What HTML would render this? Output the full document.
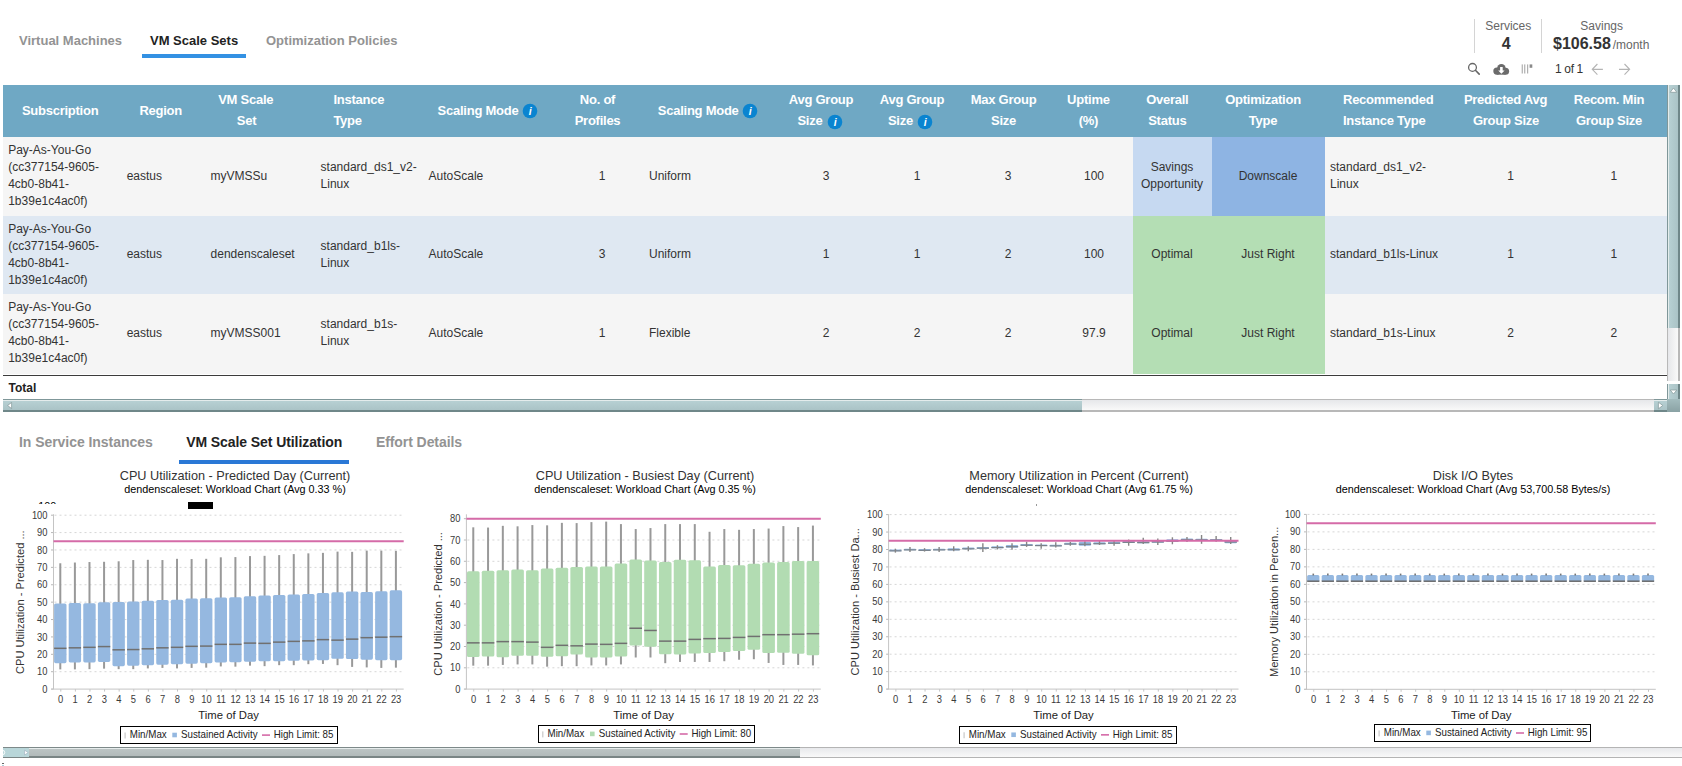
<!DOCTYPE html>
<html><head><meta charset="utf-8"><title>VM Scale Sets</title>
<style>
html,body{margin:0;padding:0;background:#fff;}
body{width:1682px;height:766px;overflow:hidden;position:relative;font-family:"Liberation Sans", sans-serif;}
.t{position:absolute;line-height:1;white-space:nowrap;}
.r{position:absolute;}
svg text{font-family:"Liberation Sans",sans-serif;}
</style></head><body>
<div class="t" style="top:34.00px;font-size:13px;font-weight:700;color:#939393;left:19.00px;">Virtual Machines</div>
<div class="t" style="top:34.00px;font-size:13px;font-weight:700;color:#222;left:150.00px;">VM Scale Sets</div>
<div class="t" style="top:34.00px;font-size:13px;font-weight:700;color:#939393;left:266.00px;">Optimization Policies</div>
<div class="r" style="left:142px;top:54px;width:104px;height:4px;background:#3391e3;"></div>
<div class="r" style="left:1474px;top:19px;width:1px;height:34px;background:#d4d4d4;"></div>
<div class="r" style="left:1541px;top:19px;width:1px;height:34px;background:#d4d4d4;"></div>
<div class="t" style="top:20.00px;font-size:12px;font-weight:400;color:#666;left:1208.30px;width:600px;text-align:center;">Services</div>
<div class="t" style="top:36.00px;font-size:16px;font-weight:700;color:#333;left:1206.20px;width:600px;text-align:center;">4</div>
<div class="t" style="top:20.00px;font-size:12px;font-weight:400;color:#666;left:1301.70px;width:600px;text-align:center;">Savings</div>
<div class="t" style="top:36.00px;font-size:16px;font-weight:700;color:#333;left:1553.00px;">$106.58</div>
<div class="t" style="top:39.00px;font-size:12px;font-weight:400;color:#666;left:1612.70px;">/month</div>
<div class="t" style="top:63.00px;font-size:12px;font-weight:400;color:#333;letter-spacing:-0.35px;left:1555.00px;">1 of 1</div>
<svg class="r" style="left:1460px;top:58px" width="180" height="22" viewBox="0 0 180 22">
<circle cx="12.5" cy="9.4" r="3.9" fill="none" stroke="#666" stroke-width="1.3"/>
<line x1="15.4" y1="12.3" x2="19.2" y2="16.1" stroke="#666" stroke-width="1.6" stroke-linecap="round"/>
<circle cx="36.9" cy="13.1" r="3.6" fill="#6b6b6b"/>
<circle cx="41.4" cy="10.2" r="4.3" fill="#6b6b6b"/>
<circle cx="45.6" cy="13.2" r="3.5" fill="#6b6b6b"/>
<rect x="36.9" y="12.5" width="8.7" height="4.2" fill="#6b6b6b"/>
<path d="M40.1 9 h2.6 v3.4 h1.9 l-3.2 3.4 l-3.2 -3.4 h1.9 z" fill="#fff"/>
<rect x="61.7" y="6.4" width="1.1" height="9.1" fill="#a8a8a8"/>
<rect x="64.2" y="6.4" width="1.1" height="9.1" fill="#a8a8a8"/>
<rect x="67.1" y="6.4" width="1.1" height="9.1" fill="#a8a8a8"/>
<rect x="69.6" y="6.4" width="2.7" height="3.4" fill="#8a8a8a"/>
<path d="M142.9 11.3 h-10.6 M137.4 6 l-5.1 5.3 l5.1 5.3" fill="none" stroke="#b4b4b4" stroke-width="1.15"/>
<path d="M159 11.3 h10.6 M164.5 6 l5.1 5.3 l-5.1 5.3" fill="none" stroke="#b4b4b4" stroke-width="1.15"/>
</svg>
<div class="r" style="left:3px;top:85px;width:1664px;height:52px;background:#6fa8c4;"></div>
<div class="r" style="left:3px;top:137px;width:1664px;height:79px;background:#f5f5f5;"></div>
<div class="r" style="left:3px;top:216px;width:1664px;height:78px;background:#dfe8f2;"></div>
<div class="r" style="left:3px;top:294px;width:1664px;height:80px;background:#f5f5f5;"></div>
<div class="r" style="left:1133px;top:137px;width:79px;height:79px;background:#c6d9f1;"></div>
<div class="r" style="left:1212px;top:137px;width:113px;height:79px;background:#8eb4e3;"></div>
<div class="r" style="left:1133px;top:216px;width:192px;height:158px;background:#b4deb4;"></div>
<div class="r" style="left:3px;top:374px;width:1664px;height:1px;background:#ffffff;"></div>
<div class="r" style="left:3px;top:375px;width:1664px;height:1px;background:#3c3c3c;"></div>
<div class="t" style="top:104.00px;font-size:13px;font-weight:700;color:#fff;letter-spacing:-0.25px;left:21.90px;">Subscription</div>
<div class="t" style="top:104.00px;font-size:13px;font-weight:700;color:#fff;letter-spacing:-0.25px;left:-139.30px;width:600px;text-align:center;">Region</div>
<div class="t" style="top:93.00px;font-size:13px;font-weight:700;color:#fff;letter-spacing:-0.25px;left:-54.30px;width:600px;text-align:center;">VM Scale</div>
<div class="t" style="top:114.00px;font-size:13px;font-weight:700;color:#fff;letter-spacing:-0.25px;left:-53.50px;width:600px;text-align:center;">Set</div>
<div class="t" style="top:93.00px;font-size:13px;font-weight:700;color:#fff;letter-spacing:-0.25px;left:333.40px;">Instance</div>
<div class="t" style="top:114.00px;font-size:13px;font-weight:700;color:#fff;letter-spacing:-0.25px;left:333.40px;">Type</div>
<div class="t" style="top:104.00px;font-size:13px;font-weight:700;color:#fff;letter-spacing:-0.25px;left:437.60px;">Scaling Mode</div>
<div class="t" style="top:93.00px;font-size:13px;font-weight:700;color:#fff;letter-spacing:-0.25px;left:297.50px;width:600px;text-align:center;">No. of</div>
<div class="t" style="top:114.00px;font-size:13px;font-weight:700;color:#fff;letter-spacing:-0.25px;left:297.50px;width:600px;text-align:center;">Profiles</div>
<div class="t" style="top:104.00px;font-size:13px;font-weight:700;color:#fff;letter-spacing:-0.25px;left:657.80px;">Scaling Mode</div>
<div class="t" style="top:93.00px;font-size:13px;font-weight:700;color:#fff;letter-spacing:-0.25px;left:521.00px;width:600px;text-align:center;">Avg Group</div>
<div class="t" style="top:114.00px;font-size:13px;font-weight:700;color:#fff;letter-spacing:-0.25px;left:797.40px;">Size</div>
<div class="t" style="top:93.00px;font-size:13px;font-weight:700;color:#fff;letter-spacing:-0.25px;left:612.00px;width:600px;text-align:center;">Avg Group</div>
<div class="t" style="top:114.00px;font-size:13px;font-weight:700;color:#fff;letter-spacing:-0.25px;left:887.90px;">Size</div>
<div class="t" style="top:93.00px;font-size:13px;font-weight:700;color:#fff;letter-spacing:-0.25px;left:703.50px;width:600px;text-align:center;">Max Group</div>
<div class="t" style="top:114.00px;font-size:13px;font-weight:700;color:#fff;letter-spacing:-0.25px;left:703.50px;width:600px;text-align:center;">Size</div>
<div class="t" style="top:93.00px;font-size:13px;font-weight:700;color:#fff;letter-spacing:-0.25px;left:788.40px;width:600px;text-align:center;">Uptime</div>
<div class="t" style="top:114.00px;font-size:13px;font-weight:700;color:#fff;letter-spacing:-0.25px;left:788.40px;width:600px;text-align:center;">(%)</div>
<div class="t" style="top:93.00px;font-size:13px;font-weight:700;color:#fff;letter-spacing:-0.25px;left:867.30px;width:600px;text-align:center;">Overall</div>
<div class="t" style="top:114.00px;font-size:13px;font-weight:700;color:#fff;letter-spacing:-0.25px;left:867.30px;width:600px;text-align:center;">Status</div>
<div class="t" style="top:93.00px;font-size:13px;font-weight:700;color:#fff;letter-spacing:-0.25px;left:963.00px;width:600px;text-align:center;">Optimization</div>
<div class="t" style="top:114.00px;font-size:13px;font-weight:700;color:#fff;letter-spacing:-0.25px;left:963.00px;width:600px;text-align:center;">Type</div>
<div class="t" style="top:93.00px;font-size:13px;font-weight:700;color:#fff;letter-spacing:-0.25px;left:1343.00px;">Recommended</div>
<div class="t" style="top:114.00px;font-size:13px;font-weight:700;color:#fff;letter-spacing:-0.25px;left:1343.00px;">Instance Type</div>
<div class="t" style="top:93.00px;font-size:13px;font-weight:700;color:#fff;letter-spacing:-0.25px;left:1205.50px;width:600px;text-align:center;">Predicted Avg</div>
<div class="t" style="top:114.00px;font-size:13px;font-weight:700;color:#fff;letter-spacing:-0.25px;left:1206.00px;width:600px;text-align:center;">Group Size</div>
<div class="t" style="top:93.00px;font-size:13px;font-weight:700;color:#fff;letter-spacing:-0.25px;left:1309.00px;width:600px;text-align:center;">Recom. Min</div>
<div class="t" style="top:114.00px;font-size:13px;font-weight:700;color:#fff;letter-spacing:-0.25px;left:1309.00px;width:600px;text-align:center;">Group Size</div>
<svg class="r" style="left:522.4px;top:103.4px" width="16" height="16" viewBox="0 0 16 16"><circle cx="8" cy="8" r="7.3" fill="#0a84d0"/><text x="8.3" y="12.2" font-family="Liberation Serif" font-style="italic" font-weight="700" font-size="10.5" fill="#fff" text-anchor="middle">i</text></svg>
<svg class="r" style="left:742.4px;top:103.4px" width="16" height="16" viewBox="0 0 16 16"><circle cx="8" cy="8" r="7.3" fill="#0a84d0"/><text x="8.3" y="12.2" font-family="Liberation Serif" font-style="italic" font-weight="700" font-size="10.5" fill="#fff" text-anchor="middle">i</text></svg>
<svg class="r" style="left:826.5px;top:113.7px" width="16" height="16" viewBox="0 0 16 16"><circle cx="8" cy="8" r="7.3" fill="#0a84d0"/><text x="8.3" y="12.2" font-family="Liberation Serif" font-style="italic" font-weight="700" font-size="10.5" fill="#fff" text-anchor="middle">i</text></svg>
<svg class="r" style="left:916.5px;top:113.7px" width="16" height="16" viewBox="0 0 16 16"><circle cx="8" cy="8" r="7.3" fill="#0a84d0"/><text x="8.3" y="12.2" font-family="Liberation Serif" font-style="italic" font-weight="700" font-size="10.5" fill="#fff" text-anchor="middle">i</text></svg>
<div class="t" style="top:144.00px;font-size:12px;font-weight:400;color:#333;left:8.20px;">Pay-As-You-Go</div>
<div class="t" style="top:161.00px;font-size:12px;font-weight:400;color:#333;left:8.20px;">(cc377154-9605-</div>
<div class="t" style="top:178.00px;font-size:12px;font-weight:400;color:#333;left:8.20px;">4cb0-8b41-</div>
<div class="t" style="top:195.00px;font-size:12px;font-weight:400;color:#333;left:8.20px;">1b39e1c4ac0f)</div>
<div class="t" style="top:170.00px;font-size:12px;font-weight:400;color:#333;left:126.70px;">eastus</div>
<div class="t" style="top:170.00px;font-size:12px;font-weight:400;color:#333;left:210.60px;">myVMSSu</div>
<div class="t" style="top:161.00px;font-size:12px;font-weight:400;color:#333;left:320.60px;">standard_ds1_v2-</div>
<div class="t" style="top:178.00px;font-size:12px;font-weight:400;color:#333;left:320.60px;">Linux</div>
<div class="t" style="top:170.00px;font-size:12px;font-weight:400;color:#333;left:428.60px;">AutoScale</div>
<div class="t" style="top:170.00px;font-size:12px;font-weight:400;color:#333;left:302.00px;width:600px;text-align:center;">1</div>
<div class="t" style="top:170.00px;font-size:12px;font-weight:400;color:#333;left:649.00px;">Uniform</div>
<div class="t" style="top:170.00px;font-size:12px;font-weight:400;color:#333;left:526.00px;width:600px;text-align:center;">3</div>
<div class="t" style="top:170.00px;font-size:12px;font-weight:400;color:#333;left:617.00px;width:600px;text-align:center;">1</div>
<div class="t" style="top:170.00px;font-size:12px;font-weight:400;color:#333;left:708.00px;width:600px;text-align:center;">3</div>
<div class="t" style="top:170.00px;font-size:12px;font-weight:400;color:#333;left:794.00px;width:600px;text-align:center;">100</div>
<div class="t" style="top:161.00px;font-size:12px;font-weight:400;color:#333;left:872.00px;width:600px;text-align:center;">Savings</div>
<div class="t" style="top:178.00px;font-size:12px;font-weight:400;color:#333;left:872.00px;width:600px;text-align:center;">Opportunity</div>
<div class="t" style="top:170.00px;font-size:12px;font-weight:400;color:#333;left:968.00px;width:600px;text-align:center;">Downscale</div>
<div class="t" style="top:161.00px;font-size:12px;font-weight:400;color:#333;left:1330.00px;">standard_ds1_v2-</div>
<div class="t" style="top:178.00px;font-size:12px;font-weight:400;color:#333;left:1330.00px;">Linux</div>
<div class="t" style="top:170.00px;font-size:12px;font-weight:400;color:#333;left:1210.50px;width:600px;text-align:center;">1</div>
<div class="t" style="top:170.00px;font-size:12px;font-weight:400;color:#333;left:1313.80px;width:600px;text-align:center;">1</div>
<div class="t" style="top:223.00px;font-size:12px;font-weight:400;color:#333;left:8.20px;">Pay-As-You-Go</div>
<div class="t" style="top:240.00px;font-size:12px;font-weight:400;color:#333;left:8.20px;">(cc377154-9605-</div>
<div class="t" style="top:257.00px;font-size:12px;font-weight:400;color:#333;left:8.20px;">4cb0-8b41-</div>
<div class="t" style="top:274.00px;font-size:12px;font-weight:400;color:#333;left:8.20px;">1b39e1c4ac0f)</div>
<div class="t" style="top:248.00px;font-size:12px;font-weight:400;color:#333;left:126.70px;">eastus</div>
<div class="t" style="top:248.00px;font-size:12px;font-weight:400;color:#333;left:210.60px;">dendenscaleset</div>
<div class="t" style="top:240.00px;font-size:12px;font-weight:400;color:#333;left:320.60px;">standard_b1ls-</div>
<div class="t" style="top:257.00px;font-size:12px;font-weight:400;color:#333;left:320.60px;">Linux</div>
<div class="t" style="top:248.00px;font-size:12px;font-weight:400;color:#333;left:428.60px;">AutoScale</div>
<div class="t" style="top:248.00px;font-size:12px;font-weight:400;color:#333;left:302.00px;width:600px;text-align:center;">3</div>
<div class="t" style="top:248.00px;font-size:12px;font-weight:400;color:#333;left:649.00px;">Uniform</div>
<div class="t" style="top:248.00px;font-size:12px;font-weight:400;color:#333;left:526.00px;width:600px;text-align:center;">1</div>
<div class="t" style="top:248.00px;font-size:12px;font-weight:400;color:#333;left:617.00px;width:600px;text-align:center;">1</div>
<div class="t" style="top:248.00px;font-size:12px;font-weight:400;color:#333;left:708.00px;width:600px;text-align:center;">2</div>
<div class="t" style="top:248.00px;font-size:12px;font-weight:400;color:#333;left:794.00px;width:600px;text-align:center;">100</div>
<div class="t" style="top:248.00px;font-size:12px;font-weight:400;color:#333;left:872.00px;width:600px;text-align:center;">Optimal</div>
<div class="t" style="top:248.00px;font-size:12px;font-weight:400;color:#333;left:968.00px;width:600px;text-align:center;">Just Right</div>
<div class="t" style="top:248.00px;font-size:12px;font-weight:400;color:#333;left:1330.00px;">standard_b1ls-Linux</div>
<div class="t" style="top:248.00px;font-size:12px;font-weight:400;color:#333;left:1210.50px;width:600px;text-align:center;">1</div>
<div class="t" style="top:248.00px;font-size:12px;font-weight:400;color:#333;left:1313.80px;width:600px;text-align:center;">1</div>
<div class="t" style="top:301.00px;font-size:12px;font-weight:400;color:#333;left:8.20px;">Pay-As-You-Go</div>
<div class="t" style="top:318.00px;font-size:12px;font-weight:400;color:#333;left:8.20px;">(cc377154-9605-</div>
<div class="t" style="top:335.00px;font-size:12px;font-weight:400;color:#333;left:8.20px;">4cb0-8b41-</div>
<div class="t" style="top:352.00px;font-size:12px;font-weight:400;color:#333;left:8.20px;">1b39e1c4ac0f)</div>
<div class="t" style="top:327.00px;font-size:12px;font-weight:400;color:#333;left:126.70px;">eastus</div>
<div class="t" style="top:327.00px;font-size:12px;font-weight:400;color:#333;left:210.60px;">myVMSS001</div>
<div class="t" style="top:318.00px;font-size:12px;font-weight:400;color:#333;left:320.60px;">standard_b1s-</div>
<div class="t" style="top:335.00px;font-size:12px;font-weight:400;color:#333;left:320.60px;">Linux</div>
<div class="t" style="top:327.00px;font-size:12px;font-weight:400;color:#333;left:428.60px;">AutoScale</div>
<div class="t" style="top:327.00px;font-size:12px;font-weight:400;color:#333;left:302.00px;width:600px;text-align:center;">1</div>
<div class="t" style="top:327.00px;font-size:12px;font-weight:400;color:#333;left:649.00px;">Flexible</div>
<div class="t" style="top:327.00px;font-size:12px;font-weight:400;color:#333;left:526.00px;width:600px;text-align:center;">2</div>
<div class="t" style="top:327.00px;font-size:12px;font-weight:400;color:#333;left:617.00px;width:600px;text-align:center;">2</div>
<div class="t" style="top:327.00px;font-size:12px;font-weight:400;color:#333;left:708.00px;width:600px;text-align:center;">2</div>
<div class="t" style="top:327.00px;font-size:12px;font-weight:400;color:#333;left:794.00px;width:600px;text-align:center;">97.9</div>
<div class="t" style="top:327.00px;font-size:12px;font-weight:400;color:#333;left:872.00px;width:600px;text-align:center;">Optimal</div>
<div class="t" style="top:327.00px;font-size:12px;font-weight:400;color:#333;left:968.00px;width:600px;text-align:center;">Just Right</div>
<div class="t" style="top:327.00px;font-size:12px;font-weight:400;color:#333;left:1330.00px;">standard_b1s-Linux</div>
<div class="t" style="top:327.00px;font-size:12px;font-weight:400;color:#333;left:1210.50px;width:600px;text-align:center;">2</div>
<div class="t" style="top:327.00px;font-size:12px;font-weight:400;color:#333;left:1313.80px;width:600px;text-align:center;">2</div>
<div class="t" style="top:382.00px;font-size:12px;font-weight:700;color:#222;left:8.50px;">Total</div>
<div class="r" style="left:3px;top:399px;width:1664px;height:13px;background:linear-gradient(#b8b8b8 0px,#b8b8b8 1px,#e6e7ea 1px,#f9f9f9 11px,#b8b8b8 11px,#b8b8b8 13px)"></div>
<div class="r" style="left:3px;top:399px;width:1079px;height:13px;background:linear-gradient(#7f9799 0px,#7f9799 1px,#e4ecec 1px,#e4ecec 2px,#b7d0d3 2px,#aac3c6 11px,#6f8789 11px,#6f8789 13px)"></div>
<svg class="r" style="left:3px;top:399px" width="13" height="13"><path d="M8.6 3.4 L4.6 6.5 L8.6 9.6 Z" fill="#fff" stroke="#8a9ea0" stroke-width="0.8" stroke-linejoin="round"/></svg>
<div class="r" style="left:1654px;top:399px;width:13px;height:13px;background:linear-gradient(#7f9799 0px,#7f9799 1px,#e4ecec 1px,#e4ecec 2px,#b7d0d3 2px,#aac3c6 11px,#6f8789 11px,#6f8789 13px)"></div>
<svg class="r" style="left:1654px;top:399px" width="13" height="13"><path d="M4.4 3.2 L8.8 6.5 L4.4 9.8 Z" fill="#fff" stroke="#8a9ea0" stroke-width="0.8" stroke-linejoin="round"/></svg>
<div class="r" style="left:1667px;top:85px;width:13px;height:296px;background:linear-gradient(90deg,#b8b8b8 0px,#b8b8b8 1px,#e6e7ea 1px,#f9f9f9 11px,#b8b8b8 11px,#b8b8b8 13px)"></div>
<div class="r" style="left:1667px;top:85px;width:13px;height:243px;background:linear-gradient(90deg,#7f9799 0px,#7f9799 1px,#e4ecec 1px,#e4ecec 2px,#b7d0d3 2px,#aac3c6 11px,#6f8789 11px,#6f8789 13px)"></div>
<svg class="r" style="left:1667px;top:85px" width="13" height="14"><path d="M3.2 7.3 L6.5 3 L9.8 7.3 Z" fill="#fff" stroke="#8a9ea0" stroke-width="0.8" stroke-linejoin="round"/></svg>
<div class="r" style="left:1667px;top:384px;width:13px;height:15px;background:linear-gradient(90deg,#7f9799 0px,#7f9799 1px,#e4ecec 1px,#e4ecec 2px,#b7d0d3 2px,#aac3c6 11px,#6f8789 11px,#6f8789 13px)"></div>
<svg class="r" style="left:1667px;top:384px" width="13" height="15"><path d="M3.2 6 L6.5 10 L9.8 6 Z" fill="#fff" stroke="#8a9ea0" stroke-width="0.8" stroke-linejoin="round"/></svg>
<div class="r" style="left:1667px;top:399px;width:13px;height:13px;background:linear-gradient(#a3bcbe,#8aa2a4)"></div>
<div class="t" style="top:435.00px;font-size:14px;font-weight:700;color:#939393;letter-spacing:-0.05px;left:19.00px;">In Service Instances</div>
<div class="t" style="top:435.00px;font-size:14px;font-weight:700;color:#222;letter-spacing:-0.08px;left:186.20px;">VM Scale Set Utilization</div>
<div class="t" style="top:435.00px;font-size:14px;font-weight:700;color:#939393;letter-spacing:-0.07px;left:375.90px;">Effort Details</div>
<div class="r" style="left:179px;top:460px;width:170px;height:4px;background:#2a78d6;"></div>
<div class="r" style="left:3px;top:747px;width:1679px;height:11px;background:linear-gradient(#b4b4b4 0px,#b4b4b4 1px,#e8e9ec 1px,#f9f9f9 10px,#b4b4b4 10px,#b4b4b4 11px)"></div>
<div class="r" style="left:3px;top:747px;width:797px;height:11px;background:linear-gradient(#7d8989 0px,#7d8989 1px,#e6ecec 1px,#e6ecec 2px,#bcc4c4 2px,#b2baba 9px,#7a8585 9px,#7a8585 11px)"></div>
<div class="r" style="left:3px;top:748px;width:26px;height:8.5px;background:#b9d6d9"></div>
<svg class="r" style="left:3px;top:747px" width="27" height="11"><path d="M21.6 3.2 L25.2 5.6 L21.6 8 Z" fill="#fff" stroke="#9ab" stroke-width="0.6"/><path d="M0.5 3 q2.5 2.5 0 5" fill="none" stroke="#fff" stroke-width="1"/></svg>
<div class="r" style="left:2px;top:762.5px;width:1.5px;height:1.5px;background:#666;"></div>
<div class="r" style="left:2px;top:764.5px;width:1.5px;height:1.5px;background:#a8d0dc;"></div>
<svg class="r" style="left:0;top:0" width="1682" height="766" viewBox="0 0 1682 766">
<line x1="54.50" y1="671.71" x2="403.70" y2="671.71" stroke="#d6d6d6" stroke-width="1" stroke-dasharray="2,3"/>
<line x1="54.50" y1="654.32" x2="403.70" y2="654.32" stroke="#d6d6d6" stroke-width="1" stroke-dasharray="2,3"/>
<line x1="54.50" y1="636.93" x2="403.70" y2="636.93" stroke="#d6d6d6" stroke-width="1" stroke-dasharray="2,3"/>
<line x1="54.50" y1="619.54" x2="403.70" y2="619.54" stroke="#d6d6d6" stroke-width="1" stroke-dasharray="2,3"/>
<line x1="54.50" y1="602.15" x2="403.70" y2="602.15" stroke="#d6d6d6" stroke-width="1" stroke-dasharray="2,3"/>
<line x1="54.50" y1="584.76" x2="403.70" y2="584.76" stroke="#d6d6d6" stroke-width="1" stroke-dasharray="2,3"/>
<line x1="54.50" y1="567.37" x2="403.70" y2="567.37" stroke="#d6d6d6" stroke-width="1" stroke-dasharray="2,3"/>
<line x1="54.50" y1="549.98" x2="403.70" y2="549.98" stroke="#d6d6d6" stroke-width="1" stroke-dasharray="2,3"/>
<line x1="54.50" y1="532.59" x2="403.70" y2="532.59" stroke="#d6d6d6" stroke-width="1" stroke-dasharray="2,3"/>
<line x1="54.50" y1="515.20" x2="403.70" y2="515.20" stroke="#d6d6d6" stroke-width="1" stroke-dasharray="2,3"/>
<line x1="51.00" y1="689.10" x2="53.50" y2="689.10" stroke="#b8b8b8" stroke-width="1"/>
<text transform="translate(47.50,692.70) scale(0.9,1)" font-size="10.4" fill="#3a3a3a" text-anchor="end">0</text>
<line x1="51.00" y1="671.71" x2="53.50" y2="671.71" stroke="#b8b8b8" stroke-width="1"/>
<text transform="translate(47.50,675.31) scale(0.9,1)" font-size="10.4" fill="#3a3a3a" text-anchor="end">10</text>
<line x1="51.00" y1="654.32" x2="53.50" y2="654.32" stroke="#b8b8b8" stroke-width="1"/>
<text transform="translate(47.50,657.92) scale(0.9,1)" font-size="10.4" fill="#3a3a3a" text-anchor="end">20</text>
<line x1="51.00" y1="636.93" x2="53.50" y2="636.93" stroke="#b8b8b8" stroke-width="1"/>
<text transform="translate(47.50,640.53) scale(0.9,1)" font-size="10.4" fill="#3a3a3a" text-anchor="end">30</text>
<line x1="51.00" y1="619.54" x2="53.50" y2="619.54" stroke="#b8b8b8" stroke-width="1"/>
<text transform="translate(47.50,623.14) scale(0.9,1)" font-size="10.4" fill="#3a3a3a" text-anchor="end">40</text>
<line x1="51.00" y1="602.15" x2="53.50" y2="602.15" stroke="#b8b8b8" stroke-width="1"/>
<text transform="translate(47.50,605.75) scale(0.9,1)" font-size="10.4" fill="#3a3a3a" text-anchor="end">50</text>
<line x1="51.00" y1="584.76" x2="53.50" y2="584.76" stroke="#b8b8b8" stroke-width="1"/>
<text transform="translate(47.50,588.36) scale(0.9,1)" font-size="10.4" fill="#3a3a3a" text-anchor="end">60</text>
<line x1="51.00" y1="567.37" x2="53.50" y2="567.37" stroke="#b8b8b8" stroke-width="1"/>
<text transform="translate(47.50,570.97) scale(0.9,1)" font-size="10.4" fill="#3a3a3a" text-anchor="end">70</text>
<line x1="51.00" y1="549.98" x2="53.50" y2="549.98" stroke="#b8b8b8" stroke-width="1"/>
<text transform="translate(47.50,553.58) scale(0.9,1)" font-size="10.4" fill="#3a3a3a" text-anchor="end">80</text>
<line x1="51.00" y1="532.59" x2="53.50" y2="532.59" stroke="#b8b8b8" stroke-width="1"/>
<text transform="translate(47.50,536.19) scale(0.9,1)" font-size="10.4" fill="#3a3a3a" text-anchor="end">90</text>
<line x1="51.00" y1="515.20" x2="53.50" y2="515.20" stroke="#b8b8b8" stroke-width="1"/>
<text transform="translate(47.50,518.80) scale(0.9,1)" font-size="10.4" fill="#3a3a3a" text-anchor="end">100</text>
<line x1="53.50" y1="514.3" x2="53.50" y2="689.10" stroke="#c4c4c4" stroke-width="1"/>
<line x1="51.50" y1="689.10" x2="403.70" y2="689.10" stroke="#c4c4c4" stroke-width="1"/>
<line x1="60.80" y1="689.10" x2="60.80" y2="691.60" stroke="#c4c4c4" stroke-width="1"/>
<text transform="translate(60.50,702.6) scale(0.9,1)" font-size="10.4" fill="#3a3a3a" text-anchor="middle">0</text>
<line x1="75.39" y1="689.10" x2="75.39" y2="691.60" stroke="#c4c4c4" stroke-width="1"/>
<text transform="translate(75.09,702.6) scale(0.9,1)" font-size="10.4" fill="#3a3a3a" text-anchor="middle">1</text>
<line x1="89.98" y1="689.10" x2="89.98" y2="691.60" stroke="#c4c4c4" stroke-width="1"/>
<text transform="translate(89.68,702.6) scale(0.9,1)" font-size="10.4" fill="#3a3a3a" text-anchor="middle">2</text>
<line x1="104.57" y1="689.10" x2="104.57" y2="691.60" stroke="#c4c4c4" stroke-width="1"/>
<text transform="translate(104.27,702.6) scale(0.9,1)" font-size="10.4" fill="#3a3a3a" text-anchor="middle">3</text>
<line x1="119.16" y1="689.10" x2="119.16" y2="691.60" stroke="#c4c4c4" stroke-width="1"/>
<text transform="translate(118.86,702.6) scale(0.9,1)" font-size="10.4" fill="#3a3a3a" text-anchor="middle">4</text>
<line x1="133.75" y1="689.10" x2="133.75" y2="691.60" stroke="#c4c4c4" stroke-width="1"/>
<text transform="translate(133.45,702.6) scale(0.9,1)" font-size="10.4" fill="#3a3a3a" text-anchor="middle">5</text>
<line x1="148.35" y1="689.10" x2="148.35" y2="691.60" stroke="#c4c4c4" stroke-width="1"/>
<text transform="translate(148.05,702.6) scale(0.9,1)" font-size="10.4" fill="#3a3a3a" text-anchor="middle">6</text>
<line x1="162.94" y1="689.10" x2="162.94" y2="691.60" stroke="#c4c4c4" stroke-width="1"/>
<text transform="translate(162.64,702.6) scale(0.9,1)" font-size="10.4" fill="#3a3a3a" text-anchor="middle">7</text>
<line x1="177.53" y1="689.10" x2="177.53" y2="691.60" stroke="#c4c4c4" stroke-width="1"/>
<text transform="translate(177.23,702.6) scale(0.9,1)" font-size="10.4" fill="#3a3a3a" text-anchor="middle">8</text>
<line x1="192.12" y1="689.10" x2="192.12" y2="691.60" stroke="#c4c4c4" stroke-width="1"/>
<text transform="translate(191.82,702.6) scale(0.9,1)" font-size="10.4" fill="#3a3a3a" text-anchor="middle">9</text>
<line x1="206.71" y1="689.10" x2="206.71" y2="691.60" stroke="#c4c4c4" stroke-width="1"/>
<text transform="translate(206.41,702.6) scale(0.9,1)" font-size="10.4" fill="#3a3a3a" text-anchor="middle">10</text>
<line x1="221.30" y1="689.10" x2="221.30" y2="691.60" stroke="#c4c4c4" stroke-width="1"/>
<text transform="translate(221.00,702.6) scale(0.9,1)" font-size="10.4" fill="#3a3a3a" text-anchor="middle">11</text>
<line x1="235.90" y1="689.10" x2="235.90" y2="691.60" stroke="#c4c4c4" stroke-width="1"/>
<text transform="translate(235.60,702.6) scale(0.9,1)" font-size="10.4" fill="#3a3a3a" text-anchor="middle">12</text>
<line x1="250.49" y1="689.10" x2="250.49" y2="691.60" stroke="#c4c4c4" stroke-width="1"/>
<text transform="translate(250.19,702.6) scale(0.9,1)" font-size="10.4" fill="#3a3a3a" text-anchor="middle">13</text>
<line x1="265.08" y1="689.10" x2="265.08" y2="691.60" stroke="#c4c4c4" stroke-width="1"/>
<text transform="translate(264.78,702.6) scale(0.9,1)" font-size="10.4" fill="#3a3a3a" text-anchor="middle">14</text>
<line x1="279.67" y1="689.10" x2="279.67" y2="691.60" stroke="#c4c4c4" stroke-width="1"/>
<text transform="translate(279.37,702.6) scale(0.9,1)" font-size="10.4" fill="#3a3a3a" text-anchor="middle">15</text>
<line x1="294.26" y1="689.10" x2="294.26" y2="691.60" stroke="#c4c4c4" stroke-width="1"/>
<text transform="translate(293.96,702.6) scale(0.9,1)" font-size="10.4" fill="#3a3a3a" text-anchor="middle">16</text>
<line x1="308.85" y1="689.10" x2="308.85" y2="691.60" stroke="#c4c4c4" stroke-width="1"/>
<text transform="translate(308.55,702.6) scale(0.9,1)" font-size="10.4" fill="#3a3a3a" text-anchor="middle">17</text>
<line x1="323.45" y1="689.10" x2="323.45" y2="691.60" stroke="#c4c4c4" stroke-width="1"/>
<text transform="translate(323.15,702.6) scale(0.9,1)" font-size="10.4" fill="#3a3a3a" text-anchor="middle">18</text>
<line x1="338.04" y1="689.10" x2="338.04" y2="691.60" stroke="#c4c4c4" stroke-width="1"/>
<text transform="translate(337.74,702.6) scale(0.9,1)" font-size="10.4" fill="#3a3a3a" text-anchor="middle">19</text>
<line x1="352.63" y1="689.10" x2="352.63" y2="691.60" stroke="#c4c4c4" stroke-width="1"/>
<text transform="translate(352.33,702.6) scale(0.9,1)" font-size="10.4" fill="#3a3a3a" text-anchor="middle">20</text>
<line x1="367.22" y1="689.10" x2="367.22" y2="691.60" stroke="#c4c4c4" stroke-width="1"/>
<text transform="translate(366.92,702.6) scale(0.9,1)" font-size="10.4" fill="#3a3a3a" text-anchor="middle">21</text>
<line x1="381.81" y1="689.10" x2="381.81" y2="691.60" stroke="#c4c4c4" stroke-width="1"/>
<text transform="translate(381.51,702.6) scale(0.9,1)" font-size="10.4" fill="#3a3a3a" text-anchor="middle">22</text>
<line x1="396.40" y1="689.10" x2="396.40" y2="691.60" stroke="#c4c4c4" stroke-width="1"/>
<text transform="translate(396.10,702.6) scale(0.9,1)" font-size="10.4" fill="#3a3a3a" text-anchor="middle">23</text>
<line x1="60.30" y1="563.27" x2="60.30" y2="604.44" stroke="#999999" stroke-width="2"/>
<line x1="60.30" y1="662.19" x2="60.30" y2="669.39" stroke="#999999" stroke-width="2"/>
<rect x="54.10" y="603.44" width="12.39" height="59.76" rx="1.6" fill="#95b8e0"/>
<line x1="54.10" y1="648.32" x2="66.49" y2="648.32" stroke="#707070" stroke-width="1.5"/>
<line x1="74.89" y1="562.53" x2="74.89" y2="603.94" stroke="#999999" stroke-width="2"/>
<line x1="74.89" y1="661.45" x2="74.89" y2="669.39" stroke="#999999" stroke-width="2"/>
<rect x="68.69" y="602.94" width="12.39" height="59.51" rx="1.6" fill="#95b8e0"/>
<line x1="68.69" y1="647.82" x2="81.08" y2="647.82" stroke="#707070" stroke-width="1.5"/>
<line x1="89.48" y1="562.03" x2="89.48" y2="604.19" stroke="#999999" stroke-width="2"/>
<line x1="89.48" y1="661.45" x2="89.48" y2="669.15" stroke="#999999" stroke-width="2"/>
<rect x="83.28" y="603.19" width="12.39" height="59.26" rx="1.6" fill="#95b8e0"/>
<line x1="83.28" y1="647.33" x2="95.67" y2="647.33" stroke="#707070" stroke-width="1.5"/>
<line x1="104.07" y1="561.78" x2="104.07" y2="603.20" stroke="#999999" stroke-width="2"/>
<line x1="104.07" y1="660.96" x2="104.07" y2="668.65" stroke="#999999" stroke-width="2"/>
<rect x="97.88" y="602.20" width="12.39" height="59.76" rx="1.6" fill="#95b8e0"/>
<line x1="97.88" y1="646.58" x2="110.27" y2="646.58" stroke="#707070" stroke-width="1.5"/>
<line x1="118.66" y1="561.29" x2="118.66" y2="602.95" stroke="#999999" stroke-width="2"/>
<line x1="118.66" y1="665.17" x2="118.66" y2="669.15" stroke="#999999" stroke-width="2"/>
<rect x="112.47" y="601.95" width="12.39" height="64.22" rx="1.6" fill="#95b8e0"/>
<line x1="112.47" y1="649.81" x2="124.86" y2="649.81" stroke="#707070" stroke-width="1.5"/>
<line x1="133.25" y1="560.05" x2="133.25" y2="602.45" stroke="#999999" stroke-width="2"/>
<line x1="133.25" y1="664.67" x2="133.25" y2="669.15" stroke="#999999" stroke-width="2"/>
<rect x="127.06" y="601.45" width="12.39" height="64.22" rx="1.6" fill="#95b8e0"/>
<line x1="127.06" y1="649.56" x2="139.45" y2="649.56" stroke="#707070" stroke-width="1.5"/>
<line x1="147.85" y1="559.80" x2="147.85" y2="601.71" stroke="#999999" stroke-width="2"/>
<line x1="147.85" y1="664.18" x2="147.85" y2="668.40" stroke="#999999" stroke-width="2"/>
<rect x="141.65" y="600.71" width="12.39" height="64.47" rx="1.6" fill="#95b8e0"/>
<line x1="141.65" y1="648.81" x2="154.04" y2="648.81" stroke="#707070" stroke-width="1.5"/>
<line x1="162.44" y1="560.05" x2="162.44" y2="600.97" stroke="#999999" stroke-width="2"/>
<line x1="162.44" y1="663.68" x2="162.44" y2="667.91" stroke="#999999" stroke-width="2"/>
<rect x="156.24" y="599.97" width="12.39" height="64.72" rx="1.6" fill="#95b8e0"/>
<line x1="156.24" y1="647.82" x2="168.63" y2="647.82" stroke="#707070" stroke-width="1.5"/>
<line x1="177.03" y1="558.81" x2="177.03" y2="600.72" stroke="#999999" stroke-width="2"/>
<line x1="177.03" y1="663.19" x2="177.03" y2="668.40" stroke="#999999" stroke-width="2"/>
<rect x="170.83" y="599.72" width="12.39" height="64.47" rx="1.6" fill="#95b8e0"/>
<line x1="170.83" y1="647.33" x2="183.22" y2="647.33" stroke="#707070" stroke-width="1.5"/>
<line x1="191.62" y1="559.05" x2="191.62" y2="599.48" stroke="#999999" stroke-width="2"/>
<line x1="191.62" y1="662.69" x2="191.62" y2="667.91" stroke="#999999" stroke-width="2"/>
<rect x="185.43" y="598.48" width="12.39" height="65.21" rx="1.6" fill="#95b8e0"/>
<line x1="185.43" y1="646.33" x2="197.82" y2="646.33" stroke="#707070" stroke-width="1.5"/>
<line x1="206.21" y1="558.81" x2="206.21" y2="599.23" stroke="#999999" stroke-width="2"/>
<line x1="206.21" y1="662.19" x2="206.21" y2="667.66" stroke="#999999" stroke-width="2"/>
<rect x="200.02" y="598.23" width="12.39" height="64.96" rx="1.6" fill="#95b8e0"/>
<line x1="200.02" y1="646.09" x2="212.41" y2="646.09" stroke="#707070" stroke-width="1.5"/>
<line x1="220.80" y1="557.32" x2="220.80" y2="598.49" stroke="#999999" stroke-width="2"/>
<line x1="220.80" y1="661.45" x2="220.80" y2="666.42" stroke="#999999" stroke-width="2"/>
<rect x="214.61" y="597.49" width="12.39" height="64.96" rx="1.6" fill="#95b8e0"/>
<line x1="214.61" y1="644.35" x2="227.00" y2="644.35" stroke="#707070" stroke-width="1.5"/>
<line x1="235.40" y1="557.07" x2="235.40" y2="598.24" stroke="#999999" stroke-width="2"/>
<line x1="235.40" y1="661.20" x2="235.40" y2="666.67" stroke="#999999" stroke-width="2"/>
<rect x="229.20" y="597.24" width="12.39" height="64.96" rx="1.6" fill="#95b8e0"/>
<line x1="229.20" y1="644.35" x2="241.59" y2="644.35" stroke="#707070" stroke-width="1.5"/>
<line x1="249.99" y1="556.08" x2="249.99" y2="597.25" stroke="#999999" stroke-width="2"/>
<line x1="249.99" y1="660.71" x2="249.99" y2="665.67" stroke="#999999" stroke-width="2"/>
<rect x="243.79" y="596.25" width="12.39" height="65.46" rx="1.6" fill="#95b8e0"/>
<line x1="243.79" y1="643.11" x2="256.18" y2="643.11" stroke="#707070" stroke-width="1.5"/>
<line x1="264.58" y1="555.83" x2="264.58" y2="596.50" stroke="#999999" stroke-width="2"/>
<line x1="264.58" y1="660.21" x2="264.58" y2="666.17" stroke="#999999" stroke-width="2"/>
<rect x="258.38" y="595.50" width="12.39" height="65.71" rx="1.6" fill="#95b8e0"/>
<line x1="258.38" y1="643.36" x2="270.77" y2="643.36" stroke="#707070" stroke-width="1.5"/>
<line x1="279.17" y1="555.09" x2="279.17" y2="596.01" stroke="#999999" stroke-width="2"/>
<line x1="279.17" y1="660.21" x2="279.17" y2="665.18" stroke="#999999" stroke-width="2"/>
<rect x="272.98" y="595.01" width="12.39" height="66.20" rx="1.6" fill="#95b8e0"/>
<line x1="272.98" y1="642.12" x2="285.37" y2="642.12" stroke="#707070" stroke-width="1.5"/>
<line x1="293.76" y1="554.09" x2="293.76" y2="595.51" stroke="#999999" stroke-width="2"/>
<line x1="293.76" y1="659.72" x2="293.76" y2="665.18" stroke="#999999" stroke-width="2"/>
<rect x="287.57" y="594.51" width="12.39" height="66.20" rx="1.6" fill="#95b8e0"/>
<line x1="287.57" y1="641.37" x2="299.96" y2="641.37" stroke="#707070" stroke-width="1.5"/>
<line x1="308.35" y1="553.35" x2="308.35" y2="595.02" stroke="#999999" stroke-width="2"/>
<line x1="308.35" y1="659.47" x2="308.35" y2="664.19" stroke="#999999" stroke-width="2"/>
<rect x="302.16" y="594.02" width="12.39" height="66.45" rx="1.6" fill="#95b8e0"/>
<line x1="302.16" y1="640.88" x2="314.55" y2="640.88" stroke="#707070" stroke-width="1.5"/>
<line x1="322.95" y1="552.86" x2="322.95" y2="594.02" stroke="#999999" stroke-width="2"/>
<line x1="322.95" y1="659.22" x2="322.95" y2="663.94" stroke="#999999" stroke-width="2"/>
<rect x="316.75" y="593.02" width="12.39" height="67.20" rx="1.6" fill="#95b8e0"/>
<line x1="316.75" y1="639.64" x2="329.14" y2="639.64" stroke="#707070" stroke-width="1.5"/>
<line x1="337.54" y1="551.62" x2="337.54" y2="593.28" stroke="#999999" stroke-width="2"/>
<line x1="337.54" y1="657.73" x2="337.54" y2="665.18" stroke="#999999" stroke-width="2"/>
<rect x="331.34" y="592.28" width="12.39" height="66.45" rx="1.6" fill="#95b8e0"/>
<line x1="331.34" y1="640.14" x2="343.73" y2="640.14" stroke="#707070" stroke-width="1.5"/>
<line x1="352.13" y1="551.86" x2="352.13" y2="592.54" stroke="#999999" stroke-width="2"/>
<line x1="352.13" y1="657.98" x2="352.13" y2="666.91" stroke="#999999" stroke-width="2"/>
<rect x="345.93" y="591.54" width="12.39" height="67.44" rx="1.6" fill="#95b8e0"/>
<line x1="345.93" y1="639.14" x2="358.32" y2="639.14" stroke="#707070" stroke-width="1.5"/>
<line x1="366.72" y1="550.62" x2="366.72" y2="593.03" stroke="#999999" stroke-width="2"/>
<line x1="366.72" y1="658.72" x2="366.72" y2="667.41" stroke="#999999" stroke-width="2"/>
<rect x="360.53" y="592.03" width="12.39" height="67.69" rx="1.6" fill="#95b8e0"/>
<line x1="360.53" y1="637.66" x2="372.92" y2="637.66" stroke="#707070" stroke-width="1.5"/>
<line x1="381.31" y1="550.62" x2="381.31" y2="592.29" stroke="#999999" stroke-width="2"/>
<line x1="381.31" y1="659.22" x2="381.31" y2="667.91" stroke="#999999" stroke-width="2"/>
<rect x="375.12" y="591.29" width="12.39" height="68.93" rx="1.6" fill="#95b8e0"/>
<line x1="375.12" y1="637.16" x2="387.51" y2="637.16" stroke="#707070" stroke-width="1.5"/>
<line x1="395.90" y1="550.87" x2="395.90" y2="591.30" stroke="#999999" stroke-width="2"/>
<line x1="395.90" y1="659.22" x2="395.90" y2="667.66" stroke="#999999" stroke-width="2"/>
<rect x="389.71" y="590.30" width="12.39" height="69.92" rx="1.6" fill="#95b8e0"/>
<line x1="389.71" y1="636.66" x2="402.10" y2="636.66" stroke="#707070" stroke-width="1.5"/>
<line x1="53.50" y1="541.29" x2="403.70" y2="541.29" stroke="#d56ba8" stroke-width="2"/>
<text x="235.00" y="479.8" font-size="12.7" fill="#333" text-anchor="middle">CPU Utilization - Predicted Day (Current)</text>
<text x="235.00" y="493.0" font-size="10.8" fill="#000" text-anchor="middle">dendenscaleset: Workload Chart (Avg 0.33 %)</text>
<text x="228.60" y="719" font-size="11.3" fill="#222" text-anchor="middle">Time of Day</text>
<text transform="translate(20.00,602.15) rotate(-90)" x="0" y="4" font-size="11.1" fill="#333" text-anchor="middle">CPU Utilization - Predicted ...</text>
<rect x="120.5" y="726.5" width="217" height="17" fill="#fff" stroke="#000" stroke-width="1"/>
<rect x="124.50" y="732.50" width="1.2" height="6" fill="#c8c8c8"/>
<text transform="translate(129.80,738.30) scale(0.95,1)" font-size="10.3" fill="#222">Min/Max</text>
<rect x="172.30" y="732.70" width="4.6" height="4.6" fill="#95b8e0"/>
<text transform="translate(181.00,738.30) scale(0.95,1)" font-size="10.3" fill="#222">Sustained Activity</text>
<rect x="262.00" y="734.30" width="8" height="1.6" fill="#d56ba8"/>
<text transform="translate(273.70,738.30) scale(0.95,1)" font-size="10.3" fill="#222">High Limit: 85</text>
<line x1="467.40" y1="667.80" x2="820.80" y2="667.80" stroke="#d6d6d6" stroke-width="1" stroke-dasharray="2,3"/>
<line x1="467.40" y1="646.50" x2="820.80" y2="646.50" stroke="#d6d6d6" stroke-width="1" stroke-dasharray="2,3"/>
<line x1="467.40" y1="625.20" x2="820.80" y2="625.20" stroke="#d6d6d6" stroke-width="1" stroke-dasharray="2,3"/>
<line x1="467.40" y1="603.90" x2="820.80" y2="603.90" stroke="#d6d6d6" stroke-width="1" stroke-dasharray="2,3"/>
<line x1="467.40" y1="582.60" x2="820.80" y2="582.60" stroke="#d6d6d6" stroke-width="1" stroke-dasharray="2,3"/>
<line x1="467.40" y1="561.30" x2="820.80" y2="561.30" stroke="#d6d6d6" stroke-width="1" stroke-dasharray="2,3"/>
<line x1="467.40" y1="540.00" x2="820.80" y2="540.00" stroke="#d6d6d6" stroke-width="1" stroke-dasharray="2,3"/>
<line x1="467.40" y1="518.70" x2="820.80" y2="518.70" stroke="#d6d6d6" stroke-width="1" stroke-dasharray="2,3"/>
<line x1="463.90" y1="689.10" x2="466.40" y2="689.10" stroke="#b8b8b8" stroke-width="1"/>
<text transform="translate(460.40,692.70) scale(0.9,1)" font-size="10.4" fill="#3a3a3a" text-anchor="end">0</text>
<line x1="463.90" y1="667.80" x2="466.40" y2="667.80" stroke="#b8b8b8" stroke-width="1"/>
<text transform="translate(460.40,671.40) scale(0.9,1)" font-size="10.4" fill="#3a3a3a" text-anchor="end">10</text>
<line x1="463.90" y1="646.50" x2="466.40" y2="646.50" stroke="#b8b8b8" stroke-width="1"/>
<text transform="translate(460.40,650.10) scale(0.9,1)" font-size="10.4" fill="#3a3a3a" text-anchor="end">20</text>
<line x1="463.90" y1="625.20" x2="466.40" y2="625.20" stroke="#b8b8b8" stroke-width="1"/>
<text transform="translate(460.40,628.80) scale(0.9,1)" font-size="10.4" fill="#3a3a3a" text-anchor="end">30</text>
<line x1="463.90" y1="603.90" x2="466.40" y2="603.90" stroke="#b8b8b8" stroke-width="1"/>
<text transform="translate(460.40,607.50) scale(0.9,1)" font-size="10.4" fill="#3a3a3a" text-anchor="end">40</text>
<line x1="463.90" y1="582.60" x2="466.40" y2="582.60" stroke="#b8b8b8" stroke-width="1"/>
<text transform="translate(460.40,586.20) scale(0.9,1)" font-size="10.4" fill="#3a3a3a" text-anchor="end">50</text>
<line x1="463.90" y1="561.30" x2="466.40" y2="561.30" stroke="#b8b8b8" stroke-width="1"/>
<text transform="translate(460.40,564.90) scale(0.9,1)" font-size="10.4" fill="#3a3a3a" text-anchor="end">60</text>
<line x1="463.90" y1="540.00" x2="466.40" y2="540.00" stroke="#b8b8b8" stroke-width="1"/>
<text transform="translate(460.40,543.60) scale(0.9,1)" font-size="10.4" fill="#3a3a3a" text-anchor="end">70</text>
<line x1="463.90" y1="518.70" x2="466.40" y2="518.70" stroke="#b8b8b8" stroke-width="1"/>
<text transform="translate(460.40,522.30) scale(0.9,1)" font-size="10.4" fill="#3a3a3a" text-anchor="end">80</text>
<line x1="466.40" y1="514.3" x2="466.40" y2="689.10" stroke="#c4c4c4" stroke-width="1"/>
<line x1="464.40" y1="689.10" x2="820.80" y2="689.10" stroke="#c4c4c4" stroke-width="1"/>
<line x1="473.78" y1="689.10" x2="473.78" y2="691.60" stroke="#c4c4c4" stroke-width="1"/>
<text transform="translate(473.48,702.6) scale(0.9,1)" font-size="10.4" fill="#3a3a3a" text-anchor="middle">0</text>
<line x1="488.55" y1="689.10" x2="488.55" y2="691.60" stroke="#c4c4c4" stroke-width="1"/>
<text transform="translate(488.25,702.6) scale(0.9,1)" font-size="10.4" fill="#3a3a3a" text-anchor="middle">1</text>
<line x1="503.32" y1="689.10" x2="503.32" y2="691.60" stroke="#c4c4c4" stroke-width="1"/>
<text transform="translate(503.02,702.6) scale(0.9,1)" font-size="10.4" fill="#3a3a3a" text-anchor="middle">2</text>
<line x1="518.08" y1="689.10" x2="518.08" y2="691.60" stroke="#c4c4c4" stroke-width="1"/>
<text transform="translate(517.78,702.6) scale(0.9,1)" font-size="10.4" fill="#3a3a3a" text-anchor="middle">3</text>
<line x1="532.85" y1="689.10" x2="532.85" y2="691.60" stroke="#c4c4c4" stroke-width="1"/>
<text transform="translate(532.55,702.6) scale(0.9,1)" font-size="10.4" fill="#3a3a3a" text-anchor="middle">4</text>
<line x1="547.62" y1="689.10" x2="547.62" y2="691.60" stroke="#c4c4c4" stroke-width="1"/>
<text transform="translate(547.32,702.6) scale(0.9,1)" font-size="10.4" fill="#3a3a3a" text-anchor="middle">5</text>
<line x1="562.38" y1="689.10" x2="562.38" y2="691.60" stroke="#c4c4c4" stroke-width="1"/>
<text transform="translate(562.08,702.6) scale(0.9,1)" font-size="10.4" fill="#3a3a3a" text-anchor="middle">6</text>
<line x1="577.15" y1="689.10" x2="577.15" y2="691.60" stroke="#c4c4c4" stroke-width="1"/>
<text transform="translate(576.85,702.6) scale(0.9,1)" font-size="10.4" fill="#3a3a3a" text-anchor="middle">7</text>
<line x1="591.92" y1="689.10" x2="591.92" y2="691.60" stroke="#c4c4c4" stroke-width="1"/>
<text transform="translate(591.62,702.6) scale(0.9,1)" font-size="10.4" fill="#3a3a3a" text-anchor="middle">8</text>
<line x1="606.68" y1="689.10" x2="606.68" y2="691.60" stroke="#c4c4c4" stroke-width="1"/>
<text transform="translate(606.38,702.6) scale(0.9,1)" font-size="10.4" fill="#3a3a3a" text-anchor="middle">9</text>
<line x1="621.45" y1="689.10" x2="621.45" y2="691.60" stroke="#c4c4c4" stroke-width="1"/>
<text transform="translate(621.15,702.6) scale(0.9,1)" font-size="10.4" fill="#3a3a3a" text-anchor="middle">10</text>
<line x1="636.22" y1="689.10" x2="636.22" y2="691.60" stroke="#c4c4c4" stroke-width="1"/>
<text transform="translate(635.92,702.6) scale(0.9,1)" font-size="10.4" fill="#3a3a3a" text-anchor="middle">11</text>
<line x1="650.98" y1="689.10" x2="650.98" y2="691.60" stroke="#c4c4c4" stroke-width="1"/>
<text transform="translate(650.68,702.6) scale(0.9,1)" font-size="10.4" fill="#3a3a3a" text-anchor="middle">12</text>
<line x1="665.75" y1="689.10" x2="665.75" y2="691.60" stroke="#c4c4c4" stroke-width="1"/>
<text transform="translate(665.45,702.6) scale(0.9,1)" font-size="10.4" fill="#3a3a3a" text-anchor="middle">13</text>
<line x1="680.52" y1="689.10" x2="680.52" y2="691.60" stroke="#c4c4c4" stroke-width="1"/>
<text transform="translate(680.22,702.6) scale(0.9,1)" font-size="10.4" fill="#3a3a3a" text-anchor="middle">14</text>
<line x1="695.28" y1="689.10" x2="695.28" y2="691.60" stroke="#c4c4c4" stroke-width="1"/>
<text transform="translate(694.98,702.6) scale(0.9,1)" font-size="10.4" fill="#3a3a3a" text-anchor="middle">15</text>
<line x1="710.05" y1="689.10" x2="710.05" y2="691.60" stroke="#c4c4c4" stroke-width="1"/>
<text transform="translate(709.75,702.6) scale(0.9,1)" font-size="10.4" fill="#3a3a3a" text-anchor="middle">16</text>
<line x1="724.82" y1="689.10" x2="724.82" y2="691.60" stroke="#c4c4c4" stroke-width="1"/>
<text transform="translate(724.52,702.6) scale(0.9,1)" font-size="10.4" fill="#3a3a3a" text-anchor="middle">17</text>
<line x1="739.58" y1="689.10" x2="739.58" y2="691.60" stroke="#c4c4c4" stroke-width="1"/>
<text transform="translate(739.28,702.6) scale(0.9,1)" font-size="10.4" fill="#3a3a3a" text-anchor="middle">18</text>
<line x1="754.35" y1="689.10" x2="754.35" y2="691.60" stroke="#c4c4c4" stroke-width="1"/>
<text transform="translate(754.05,702.6) scale(0.9,1)" font-size="10.4" fill="#3a3a3a" text-anchor="middle">19</text>
<line x1="769.12" y1="689.10" x2="769.12" y2="691.60" stroke="#c4c4c4" stroke-width="1"/>
<text transform="translate(768.82,702.6) scale(0.9,1)" font-size="10.4" fill="#3a3a3a" text-anchor="middle">20</text>
<line x1="783.88" y1="689.10" x2="783.88" y2="691.60" stroke="#c4c4c4" stroke-width="1"/>
<text transform="translate(783.58,702.6) scale(0.9,1)" font-size="10.4" fill="#3a3a3a" text-anchor="middle">21</text>
<line x1="798.65" y1="689.10" x2="798.65" y2="691.60" stroke="#c4c4c4" stroke-width="1"/>
<text transform="translate(798.35,702.6) scale(0.9,1)" font-size="10.4" fill="#3a3a3a" text-anchor="middle">22</text>
<line x1="813.42" y1="689.10" x2="813.42" y2="691.60" stroke="#c4c4c4" stroke-width="1"/>
<text transform="translate(813.12,702.6) scale(0.9,1)" font-size="10.4" fill="#3a3a3a" text-anchor="middle">23</text>
<line x1="473.28" y1="527.32" x2="473.28" y2="572.20" stroke="#999999" stroke-width="2"/>
<line x1="473.28" y1="656.00" x2="473.28" y2="665.67" stroke="#999999" stroke-width="2"/>
<rect x="467.00" y="571.20" width="12.57" height="85.79" rx="1.6" fill="#b2dcb2"/>
<line x1="467.00" y1="642.86" x2="479.57" y2="642.86" stroke="#707070" stroke-width="1.5"/>
<line x1="488.05" y1="527.56" x2="488.05" y2="571.71" stroke="#999999" stroke-width="2"/>
<line x1="488.05" y1="655.50" x2="488.05" y2="665.67" stroke="#999999" stroke-width="2"/>
<rect x="481.77" y="570.71" width="12.57" height="85.79" rx="1.6" fill="#b2dcb2"/>
<line x1="481.77" y1="642.86" x2="494.33" y2="642.86" stroke="#707070" stroke-width="1.5"/>
<line x1="502.82" y1="525.83" x2="502.82" y2="571.21" stroke="#999999" stroke-width="2"/>
<line x1="502.82" y1="656.24" x2="502.82" y2="664.93" stroke="#999999" stroke-width="2"/>
<rect x="496.53" y="570.21" width="12.57" height="87.03" rx="1.6" fill="#b2dcb2"/>
<line x1="496.53" y1="641.62" x2="509.10" y2="641.62" stroke="#707070" stroke-width="1.5"/>
<line x1="517.58" y1="526.32" x2="517.58" y2="570.47" stroke="#999999" stroke-width="2"/>
<line x1="517.58" y1="654.76" x2="517.58" y2="664.43" stroke="#999999" stroke-width="2"/>
<rect x="511.30" y="569.47" width="12.57" height="86.29" rx="1.6" fill="#b2dcb2"/>
<line x1="511.30" y1="641.62" x2="523.87" y2="641.62" stroke="#707070" stroke-width="1.5"/>
<line x1="532.35" y1="525.08" x2="532.35" y2="571.21" stroke="#999999" stroke-width="2"/>
<line x1="532.35" y1="654.76" x2="532.35" y2="664.43" stroke="#999999" stroke-width="2"/>
<rect x="526.07" y="570.21" width="12.57" height="85.54" rx="1.6" fill="#b2dcb2"/>
<line x1="526.07" y1="642.12" x2="538.63" y2="642.12" stroke="#707070" stroke-width="1.5"/>
<line x1="547.12" y1="525.33" x2="547.12" y2="569.48" stroke="#999999" stroke-width="2"/>
<line x1="547.12" y1="655.75" x2="547.12" y2="666.67" stroke="#999999" stroke-width="2"/>
<rect x="540.83" y="568.48" width="12.57" height="88.27" rx="1.6" fill="#b2dcb2"/>
<line x1="540.83" y1="647.33" x2="553.40" y2="647.33" stroke="#707070" stroke-width="1.5"/>
<line x1="561.88" y1="522.85" x2="561.88" y2="568.73" stroke="#999999" stroke-width="2"/>
<line x1="561.88" y1="655.25" x2="561.88" y2="666.17" stroke="#999999" stroke-width="2"/>
<rect x="555.60" y="567.73" width="12.57" height="88.52" rx="1.6" fill="#b2dcb2"/>
<line x1="555.60" y1="645.34" x2="568.17" y2="645.34" stroke="#707070" stroke-width="1.5"/>
<line x1="576.65" y1="523.10" x2="576.65" y2="567.99" stroke="#999999" stroke-width="2"/>
<line x1="576.65" y1="653.52" x2="576.65" y2="666.17" stroke="#999999" stroke-width="2"/>
<rect x="570.37" y="566.99" width="12.57" height="87.53" rx="1.6" fill="#b2dcb2"/>
<line x1="570.37" y1="645.84" x2="582.93" y2="645.84" stroke="#707070" stroke-width="1.5"/>
<line x1="591.42" y1="522.11" x2="591.42" y2="567.49" stroke="#999999" stroke-width="2"/>
<line x1="591.42" y1="656.49" x2="591.42" y2="665.43" stroke="#999999" stroke-width="2"/>
<rect x="585.13" y="566.49" width="12.57" height="91.00" rx="1.6" fill="#b2dcb2"/>
<line x1="585.13" y1="644.10" x2="597.70" y2="644.10" stroke="#707070" stroke-width="1.5"/>
<line x1="606.18" y1="521.61" x2="606.18" y2="567.49" stroke="#999999" stroke-width="2"/>
<line x1="606.18" y1="656.49" x2="606.18" y2="665.43" stroke="#999999" stroke-width="2"/>
<rect x="599.90" y="566.49" width="12.57" height="91.00" rx="1.6" fill="#b2dcb2"/>
<line x1="599.90" y1="644.35" x2="612.47" y2="644.35" stroke="#707070" stroke-width="1.5"/>
<line x1="620.95" y1="524.09" x2="620.95" y2="564.52" stroke="#999999" stroke-width="2"/>
<line x1="620.95" y1="655.50" x2="620.95" y2="664.43" stroke="#999999" stroke-width="2"/>
<rect x="614.67" y="563.52" width="12.57" height="92.98" rx="1.6" fill="#b2dcb2"/>
<line x1="614.67" y1="643.36" x2="627.23" y2="643.36" stroke="#707070" stroke-width="1.5"/>
<line x1="635.72" y1="529.05" x2="635.72" y2="560.55" stroke="#999999" stroke-width="2"/>
<line x1="635.72" y1="644.59" x2="635.72" y2="657.49" stroke="#999999" stroke-width="2"/>
<rect x="629.43" y="559.55" width="12.57" height="86.04" rx="1.6" fill="#b2dcb2"/>
<line x1="629.43" y1="628.23" x2="642.00" y2="628.23" stroke="#707070" stroke-width="1.5"/>
<line x1="650.48" y1="528.06" x2="650.48" y2="561.54" stroke="#999999" stroke-width="2"/>
<line x1="650.48" y1="645.83" x2="650.48" y2="657.49" stroke="#999999" stroke-width="2"/>
<rect x="644.20" y="560.54" width="12.57" height="86.29" rx="1.6" fill="#b2dcb2"/>
<line x1="644.20" y1="630.46" x2="656.77" y2="630.46" stroke="#707070" stroke-width="1.5"/>
<line x1="665.25" y1="524.09" x2="665.25" y2="563.03" stroke="#999999" stroke-width="2"/>
<line x1="665.25" y1="653.27" x2="665.25" y2="663.19" stroke="#999999" stroke-width="2"/>
<rect x="658.97" y="562.03" width="12.57" height="92.24" rx="1.6" fill="#b2dcb2"/>
<line x1="658.97" y1="641.13" x2="671.53" y2="641.13" stroke="#707070" stroke-width="1.5"/>
<line x1="680.02" y1="524.09" x2="680.02" y2="560.80" stroke="#999999" stroke-width="2"/>
<line x1="680.02" y1="653.52" x2="680.02" y2="661.96" stroke="#999999" stroke-width="2"/>
<rect x="673.73" y="559.80" width="12.57" height="94.72" rx="1.6" fill="#b2dcb2"/>
<line x1="673.73" y1="641.13" x2="686.30" y2="641.13" stroke="#707070" stroke-width="1.5"/>
<line x1="694.78" y1="524.09" x2="694.78" y2="561.29" stroke="#999999" stroke-width="2"/>
<line x1="694.78" y1="652.52" x2="694.78" y2="661.96" stroke="#999999" stroke-width="2"/>
<rect x="688.50" y="560.29" width="12.57" height="93.23" rx="1.6" fill="#b2dcb2"/>
<line x1="688.50" y1="639.39" x2="701.07" y2="639.39" stroke="#707070" stroke-width="1.5"/>
<line x1="709.55" y1="531.78" x2="709.55" y2="567.49" stroke="#999999" stroke-width="2"/>
<line x1="709.55" y1="652.03" x2="709.55" y2="661.96" stroke="#999999" stroke-width="2"/>
<rect x="703.27" y="566.49" width="12.57" height="86.54" rx="1.6" fill="#b2dcb2"/>
<line x1="703.27" y1="638.65" x2="715.83" y2="638.65" stroke="#707070" stroke-width="1.5"/>
<line x1="724.32" y1="529.05" x2="724.32" y2="566.00" stroke="#999999" stroke-width="2"/>
<line x1="724.32" y1="651.04" x2="724.32" y2="661.21" stroke="#999999" stroke-width="2"/>
<rect x="718.03" y="565.00" width="12.57" height="87.03" rx="1.6" fill="#b2dcb2"/>
<line x1="718.03" y1="638.40" x2="730.60" y2="638.40" stroke="#707070" stroke-width="1.5"/>
<line x1="739.08" y1="529.80" x2="739.08" y2="566.25" stroke="#999999" stroke-width="2"/>
<line x1="739.08" y1="650.05" x2="739.08" y2="659.72" stroke="#999999" stroke-width="2"/>
<rect x="732.80" y="565.25" width="12.57" height="85.79" rx="1.6" fill="#b2dcb2"/>
<line x1="732.80" y1="637.41" x2="745.37" y2="637.41" stroke="#707070" stroke-width="1.5"/>
<line x1="753.85" y1="529.05" x2="753.85" y2="564.77" stroke="#999999" stroke-width="2"/>
<line x1="753.85" y1="648.81" x2="753.85" y2="659.23" stroke="#999999" stroke-width="2"/>
<rect x="747.57" y="563.77" width="12.57" height="86.04" rx="1.6" fill="#b2dcb2"/>
<line x1="747.57" y1="636.42" x2="760.13" y2="636.42" stroke="#707070" stroke-width="1.5"/>
<line x1="768.62" y1="528.56" x2="768.62" y2="563.53" stroke="#999999" stroke-width="2"/>
<line x1="768.62" y1="652.03" x2="768.62" y2="662.95" stroke="#999999" stroke-width="2"/>
<rect x="762.33" y="562.53" width="12.57" height="90.50" rx="1.6" fill="#b2dcb2"/>
<line x1="762.33" y1="634.68" x2="774.90" y2="634.68" stroke="#707070" stroke-width="1.5"/>
<line x1="783.38" y1="526.08" x2="783.38" y2="563.03" stroke="#999999" stroke-width="2"/>
<line x1="783.38" y1="651.78" x2="783.38" y2="664.93" stroke="#999999" stroke-width="2"/>
<rect x="777.10" y="562.03" width="12.57" height="90.75" rx="1.6" fill="#b2dcb2"/>
<line x1="777.10" y1="634.68" x2="789.67" y2="634.68" stroke="#707070" stroke-width="1.5"/>
<line x1="798.15" y1="527.07" x2="798.15" y2="562.04" stroke="#999999" stroke-width="2"/>
<line x1="798.15" y1="652.77" x2="798.15" y2="664.93" stroke="#999999" stroke-width="2"/>
<rect x="791.87" y="561.04" width="12.57" height="92.73" rx="1.6" fill="#b2dcb2"/>
<line x1="791.87" y1="634.18" x2="804.43" y2="634.18" stroke="#707070" stroke-width="1.5"/>
<line x1="812.92" y1="525.58" x2="812.92" y2="562.04" stroke="#999999" stroke-width="2"/>
<line x1="812.92" y1="654.26" x2="812.92" y2="665.43" stroke="#999999" stroke-width="2"/>
<rect x="806.63" y="561.04" width="12.57" height="94.22" rx="1.6" fill="#b2dcb2"/>
<line x1="806.63" y1="633.69" x2="819.20" y2="633.69" stroke="#707070" stroke-width="1.5"/>
<line x1="466.40" y1="518.70" x2="820.80" y2="518.70" stroke="#d56ba8" stroke-width="2"/>
<text x="645.00" y="479.8" font-size="12.7" fill="#333" text-anchor="middle">CPU Utilization - Busiest Day (Current)</text>
<text x="645.00" y="493.0" font-size="10.8" fill="#000" text-anchor="middle">dendenscaleset: Workload Chart (Avg 0.35 %)</text>
<text x="643.60" y="719" font-size="11.3" fill="#222" text-anchor="middle">Time of Day</text>
<text transform="translate(437.80,603.90) rotate(-90)" x="0" y="4" font-size="11.1" fill="#333" text-anchor="middle">CPU Utilization - Predicted ...</text>
<rect x="538.5" y="725.5" width="216" height="17" fill="#fff" stroke="#000" stroke-width="1"/>
<rect x="542.20" y="731.40" width="1.2" height="6" fill="#c8c8c8"/>
<text transform="translate(547.50,737.30) scale(0.95,1)" font-size="10.3" fill="#222">Min/Max</text>
<rect x="590.00" y="731.60" width="4.6" height="4.6" fill="#b2dcb2"/>
<text transform="translate(598.70,737.30) scale(0.95,1)" font-size="10.3" fill="#222">Sustained Activity</text>
<rect x="679.70" y="733.20" width="8" height="1.6" fill="#d56ba8"/>
<text transform="translate(691.40,737.30) scale(0.95,1)" font-size="10.3" fill="#222">High Limit: 80</text>
<line x1="889.60" y1="671.65" x2="1238.50" y2="671.65" stroke="#d6d6d6" stroke-width="1" stroke-dasharray="2,3"/>
<line x1="889.60" y1="654.20" x2="1238.50" y2="654.20" stroke="#d6d6d6" stroke-width="1" stroke-dasharray="2,3"/>
<line x1="889.60" y1="636.75" x2="1238.50" y2="636.75" stroke="#d6d6d6" stroke-width="1" stroke-dasharray="2,3"/>
<line x1="889.60" y1="619.30" x2="1238.50" y2="619.30" stroke="#d6d6d6" stroke-width="1" stroke-dasharray="2,3"/>
<line x1="889.60" y1="601.85" x2="1238.50" y2="601.85" stroke="#d6d6d6" stroke-width="1" stroke-dasharray="2,3"/>
<line x1="889.60" y1="584.40" x2="1238.50" y2="584.40" stroke="#d6d6d6" stroke-width="1" stroke-dasharray="2,3"/>
<line x1="889.60" y1="566.95" x2="1238.50" y2="566.95" stroke="#d6d6d6" stroke-width="1" stroke-dasharray="2,3"/>
<line x1="889.60" y1="549.50" x2="1238.50" y2="549.50" stroke="#d6d6d6" stroke-width="1" stroke-dasharray="2,3"/>
<line x1="889.60" y1="532.05" x2="1238.50" y2="532.05" stroke="#d6d6d6" stroke-width="1" stroke-dasharray="2,3"/>
<line x1="889.60" y1="514.60" x2="1238.50" y2="514.60" stroke="#d6d6d6" stroke-width="1" stroke-dasharray="2,3"/>
<line x1="886.10" y1="689.10" x2="888.60" y2="689.10" stroke="#b8b8b8" stroke-width="1"/>
<text transform="translate(882.60,692.70) scale(0.9,1)" font-size="10.4" fill="#3a3a3a" text-anchor="end">0</text>
<line x1="886.10" y1="671.65" x2="888.60" y2="671.65" stroke="#b8b8b8" stroke-width="1"/>
<text transform="translate(882.60,675.25) scale(0.9,1)" font-size="10.4" fill="#3a3a3a" text-anchor="end">10</text>
<line x1="886.10" y1="654.20" x2="888.60" y2="654.20" stroke="#b8b8b8" stroke-width="1"/>
<text transform="translate(882.60,657.80) scale(0.9,1)" font-size="10.4" fill="#3a3a3a" text-anchor="end">20</text>
<line x1="886.10" y1="636.75" x2="888.60" y2="636.75" stroke="#b8b8b8" stroke-width="1"/>
<text transform="translate(882.60,640.35) scale(0.9,1)" font-size="10.4" fill="#3a3a3a" text-anchor="end">30</text>
<line x1="886.10" y1="619.30" x2="888.60" y2="619.30" stroke="#b8b8b8" stroke-width="1"/>
<text transform="translate(882.60,622.90) scale(0.9,1)" font-size="10.4" fill="#3a3a3a" text-anchor="end">40</text>
<line x1="886.10" y1="601.85" x2="888.60" y2="601.85" stroke="#b8b8b8" stroke-width="1"/>
<text transform="translate(882.60,605.45) scale(0.9,1)" font-size="10.4" fill="#3a3a3a" text-anchor="end">50</text>
<line x1="886.10" y1="584.40" x2="888.60" y2="584.40" stroke="#b8b8b8" stroke-width="1"/>
<text transform="translate(882.60,588.00) scale(0.9,1)" font-size="10.4" fill="#3a3a3a" text-anchor="end">60</text>
<line x1="886.10" y1="566.95" x2="888.60" y2="566.95" stroke="#b8b8b8" stroke-width="1"/>
<text transform="translate(882.60,570.55) scale(0.9,1)" font-size="10.4" fill="#3a3a3a" text-anchor="end">70</text>
<line x1="886.10" y1="549.50" x2="888.60" y2="549.50" stroke="#b8b8b8" stroke-width="1"/>
<text transform="translate(882.60,553.10) scale(0.9,1)" font-size="10.4" fill="#3a3a3a" text-anchor="end">80</text>
<line x1="886.10" y1="532.05" x2="888.60" y2="532.05" stroke="#b8b8b8" stroke-width="1"/>
<text transform="translate(882.60,535.65) scale(0.9,1)" font-size="10.4" fill="#3a3a3a" text-anchor="end">90</text>
<line x1="886.10" y1="514.60" x2="888.60" y2="514.60" stroke="#b8b8b8" stroke-width="1"/>
<text transform="translate(882.60,518.20) scale(0.9,1)" font-size="10.4" fill="#3a3a3a" text-anchor="end">100</text>
<line x1="888.60" y1="514.3" x2="888.60" y2="689.10" stroke="#c4c4c4" stroke-width="1"/>
<line x1="886.60" y1="689.10" x2="1238.50" y2="689.10" stroke="#c4c4c4" stroke-width="1"/>
<line x1="895.89" y1="689.10" x2="895.89" y2="691.60" stroke="#c4c4c4" stroke-width="1"/>
<text transform="translate(895.59,702.6) scale(0.9,1)" font-size="10.4" fill="#3a3a3a" text-anchor="middle">0</text>
<line x1="910.47" y1="689.10" x2="910.47" y2="691.60" stroke="#c4c4c4" stroke-width="1"/>
<text transform="translate(910.17,702.6) scale(0.9,1)" font-size="10.4" fill="#3a3a3a" text-anchor="middle">1</text>
<line x1="925.05" y1="689.10" x2="925.05" y2="691.60" stroke="#c4c4c4" stroke-width="1"/>
<text transform="translate(924.75,702.6) scale(0.9,1)" font-size="10.4" fill="#3a3a3a" text-anchor="middle">2</text>
<line x1="939.63" y1="689.10" x2="939.63" y2="691.60" stroke="#c4c4c4" stroke-width="1"/>
<text transform="translate(939.33,702.6) scale(0.9,1)" font-size="10.4" fill="#3a3a3a" text-anchor="middle">3</text>
<line x1="954.21" y1="689.10" x2="954.21" y2="691.60" stroke="#c4c4c4" stroke-width="1"/>
<text transform="translate(953.91,702.6) scale(0.9,1)" font-size="10.4" fill="#3a3a3a" text-anchor="middle">4</text>
<line x1="968.79" y1="689.10" x2="968.79" y2="691.60" stroke="#c4c4c4" stroke-width="1"/>
<text transform="translate(968.49,702.6) scale(0.9,1)" font-size="10.4" fill="#3a3a3a" text-anchor="middle">5</text>
<line x1="983.36" y1="689.10" x2="983.36" y2="691.60" stroke="#c4c4c4" stroke-width="1"/>
<text transform="translate(983.06,702.6) scale(0.9,1)" font-size="10.4" fill="#3a3a3a" text-anchor="middle">6</text>
<line x1="997.94" y1="689.10" x2="997.94" y2="691.60" stroke="#c4c4c4" stroke-width="1"/>
<text transform="translate(997.64,702.6) scale(0.9,1)" font-size="10.4" fill="#3a3a3a" text-anchor="middle">7</text>
<line x1="1012.52" y1="689.10" x2="1012.52" y2="691.60" stroke="#c4c4c4" stroke-width="1"/>
<text transform="translate(1012.22,702.6) scale(0.9,1)" font-size="10.4" fill="#3a3a3a" text-anchor="middle">8</text>
<line x1="1027.10" y1="689.10" x2="1027.10" y2="691.60" stroke="#c4c4c4" stroke-width="1"/>
<text transform="translate(1026.80,702.6) scale(0.9,1)" font-size="10.4" fill="#3a3a3a" text-anchor="middle">9</text>
<line x1="1041.68" y1="689.10" x2="1041.68" y2="691.60" stroke="#c4c4c4" stroke-width="1"/>
<text transform="translate(1041.38,702.6) scale(0.9,1)" font-size="10.4" fill="#3a3a3a" text-anchor="middle">10</text>
<line x1="1056.26" y1="689.10" x2="1056.26" y2="691.60" stroke="#c4c4c4" stroke-width="1"/>
<text transform="translate(1055.96,702.6) scale(0.9,1)" font-size="10.4" fill="#3a3a3a" text-anchor="middle">11</text>
<line x1="1070.84" y1="689.10" x2="1070.84" y2="691.60" stroke="#c4c4c4" stroke-width="1"/>
<text transform="translate(1070.54,702.6) scale(0.9,1)" font-size="10.4" fill="#3a3a3a" text-anchor="middle">12</text>
<line x1="1085.42" y1="689.10" x2="1085.42" y2="691.60" stroke="#c4c4c4" stroke-width="1"/>
<text transform="translate(1085.12,702.6) scale(0.9,1)" font-size="10.4" fill="#3a3a3a" text-anchor="middle">13</text>
<line x1="1100.00" y1="689.10" x2="1100.00" y2="691.60" stroke="#c4c4c4" stroke-width="1"/>
<text transform="translate(1099.70,702.6) scale(0.9,1)" font-size="10.4" fill="#3a3a3a" text-anchor="middle">14</text>
<line x1="1114.58" y1="689.10" x2="1114.58" y2="691.60" stroke="#c4c4c4" stroke-width="1"/>
<text transform="translate(1114.28,702.6) scale(0.9,1)" font-size="10.4" fill="#3a3a3a" text-anchor="middle">15</text>
<line x1="1129.16" y1="689.10" x2="1129.16" y2="691.60" stroke="#c4c4c4" stroke-width="1"/>
<text transform="translate(1128.86,702.6) scale(0.9,1)" font-size="10.4" fill="#3a3a3a" text-anchor="middle">16</text>
<line x1="1143.74" y1="689.10" x2="1143.74" y2="691.60" stroke="#c4c4c4" stroke-width="1"/>
<text transform="translate(1143.44,702.6) scale(0.9,1)" font-size="10.4" fill="#3a3a3a" text-anchor="middle">17</text>
<line x1="1158.31" y1="689.10" x2="1158.31" y2="691.60" stroke="#c4c4c4" stroke-width="1"/>
<text transform="translate(1158.01,702.6) scale(0.9,1)" font-size="10.4" fill="#3a3a3a" text-anchor="middle">18</text>
<line x1="1172.89" y1="689.10" x2="1172.89" y2="691.60" stroke="#c4c4c4" stroke-width="1"/>
<text transform="translate(1172.59,702.6) scale(0.9,1)" font-size="10.4" fill="#3a3a3a" text-anchor="middle">19</text>
<line x1="1187.47" y1="689.10" x2="1187.47" y2="691.60" stroke="#c4c4c4" stroke-width="1"/>
<text transform="translate(1187.17,702.6) scale(0.9,1)" font-size="10.4" fill="#3a3a3a" text-anchor="middle">20</text>
<line x1="1202.05" y1="689.10" x2="1202.05" y2="691.60" stroke="#c4c4c4" stroke-width="1"/>
<text transform="translate(1201.75,702.6) scale(0.9,1)" font-size="10.4" fill="#3a3a3a" text-anchor="middle">21</text>
<line x1="1216.63" y1="689.10" x2="1216.63" y2="691.60" stroke="#c4c4c4" stroke-width="1"/>
<text transform="translate(1216.33,702.6) scale(0.9,1)" font-size="10.4" fill="#3a3a3a" text-anchor="middle">22</text>
<line x1="1231.21" y1="689.10" x2="1231.21" y2="691.60" stroke="#c4c4c4" stroke-width="1"/>
<text transform="translate(1230.91,702.6) scale(0.9,1)" font-size="10.4" fill="#3a3a3a" text-anchor="middle">23</text>
<rect x="889.25" y="549.55" width="12.28" height="1.82" rx="1" fill="#95b8e0"/>
<line x1="889.25" y1="550.86" x2="901.53" y2="550.86" stroke="#788089" stroke-width="1.2"/>
<line x1="895.39" y1="548.69" x2="895.39" y2="552.65" stroke="#858585" stroke-width="1.4"/>
<rect x="903.83" y="548.69" width="12.28" height="1.61" rx="1" fill="#95b8e0"/>
<line x1="903.83" y1="549.90" x2="916.11" y2="549.90" stroke="#788089" stroke-width="1.2"/>
<line x1="909.97" y1="547.09" x2="909.97" y2="551.90" stroke="#858585" stroke-width="1.4"/>
<rect x="918.41" y="549.02" width="12.28" height="1.82" rx="1" fill="#95b8e0"/>
<line x1="918.41" y1="550.33" x2="930.69" y2="550.33" stroke="#788089" stroke-width="1.2"/>
<line x1="924.55" y1="548.16" x2="924.55" y2="551.58" stroke="#858585" stroke-width="1.4"/>
<rect x="932.99" y="548.69" width="12.28" height="1.61" rx="1" fill="#95b8e0"/>
<line x1="932.99" y1="549.90" x2="945.27" y2="549.90" stroke="#788089" stroke-width="1.2"/>
<line x1="939.13" y1="547.09" x2="939.13" y2="551.90" stroke="#858585" stroke-width="1.4"/>
<rect x="947.57" y="548.16" width="12.28" height="2.35" rx="1" fill="#95b8e0"/>
<line x1="947.57" y1="549.74" x2="959.85" y2="549.74" stroke="#788089" stroke-width="1.2"/>
<line x1="953.71" y1="546.23" x2="953.71" y2="551.16" stroke="#858585" stroke-width="1.4"/>
<rect x="962.15" y="547.62" width="12.28" height="1.61" rx="1" fill="#95b8e0"/>
<line x1="962.15" y1="548.83" x2="974.43" y2="548.83" stroke="#788089" stroke-width="1.2"/>
<line x1="968.29" y1="546.23" x2="968.29" y2="551.16" stroke="#858585" stroke-width="1.4"/>
<rect x="976.73" y="546.88" width="12.28" height="1.82" rx="1" fill="#95b8e0"/>
<line x1="976.73" y1="548.18" x2="989.00" y2="548.18" stroke="#788089" stroke-width="1.2"/>
<line x1="982.86" y1="543.34" x2="982.86" y2="552.12" stroke="#858585" stroke-width="1.4"/>
<rect x="991.30" y="546.23" width="12.28" height="1.93" rx="1" fill="#95b8e0"/>
<line x1="991.30" y1="547.60" x2="1003.58" y2="547.60" stroke="#788089" stroke-width="1.2"/>
<line x1="997.44" y1="545.16" x2="997.44" y2="549.44" stroke="#858585" stroke-width="1.4"/>
<rect x="1005.88" y="544.95" width="12.28" height="2.68" rx="1" fill="#95b8e0"/>
<line x1="1005.88" y1="546.69" x2="1018.16" y2="546.69" stroke="#788089" stroke-width="1.2"/>
<line x1="1012.02" y1="543.34" x2="1012.02" y2="549.76" stroke="#858585" stroke-width="1.4"/>
<rect x="1020.46" y="543.88" width="12.28" height="1.93" rx="1" fill="#95b8e0"/>
<line x1="1020.46" y1="545.24" x2="1032.74" y2="545.24" stroke="#788089" stroke-width="1.2"/>
<line x1="1026.60" y1="541.74" x2="1026.60" y2="546.88" stroke="#858585" stroke-width="1.4"/>
<rect x="1035.04" y="544.41" width="12.28" height="1.61" rx="1" fill="#95b8e0"/>
<line x1="1035.04" y1="545.62" x2="1047.32" y2="545.62" stroke="#788089" stroke-width="1.2"/>
<line x1="1041.18" y1="543.34" x2="1041.18" y2="548.69" stroke="#858585" stroke-width="1.4"/>
<rect x="1049.62" y="544.73" width="12.28" height="1.50" rx="1" fill="#95b8e0"/>
<line x1="1049.62" y1="545.88" x2="1061.90" y2="545.88" stroke="#788089" stroke-width="1.2"/>
<line x1="1055.76" y1="542.27" x2="1055.76" y2="547.62" stroke="#858585" stroke-width="1.4"/>
<rect x="1064.20" y="542.70" width="12.28" height="1.92" rx="1" fill="#95b8e0"/>
<line x1="1064.20" y1="544.06" x2="1076.48" y2="544.06" stroke="#788089" stroke-width="1.2"/>
<line x1="1070.34" y1="542.02" x2="1070.34" y2="545.75" stroke="#858585" stroke-width="1.4"/>
<rect x="1078.78" y="542.02" width="12.28" height="3.73" rx="1" fill="#95b8e0"/>
<line x1="1078.78" y1="544.28" x2="1091.06" y2="544.28" stroke="#788089" stroke-width="1.2"/>
<line x1="1084.92" y1="541.23" x2="1084.92" y2="546.31" stroke="#858585" stroke-width="1.4"/>
<rect x="1093.36" y="542.36" width="12.28" height="1.92" rx="1" fill="#95b8e0"/>
<line x1="1093.36" y1="543.72" x2="1105.64" y2="543.72" stroke="#788089" stroke-width="1.2"/>
<line x1="1099.50" y1="540.44" x2="1099.50" y2="544.96" stroke="#858585" stroke-width="1.4"/>
<rect x="1107.94" y="541.79" width="12.28" height="2.03" rx="1" fill="#95b8e0"/>
<line x1="1107.94" y1="543.21" x2="1120.22" y2="543.21" stroke="#788089" stroke-width="1.2"/>
<line x1="1114.08" y1="540.66" x2="1114.08" y2="545.75" stroke="#858585" stroke-width="1.4"/>
<rect x="1122.52" y="540.89" width="12.28" height="2.03" rx="1" fill="#95b8e0"/>
<line x1="1122.52" y1="542.31" x2="1134.80" y2="542.31" stroke="#788089" stroke-width="1.2"/>
<line x1="1128.66" y1="539.53" x2="1128.66" y2="545.75" stroke="#858585" stroke-width="1.4"/>
<rect x="1137.10" y="541.23" width="12.28" height="2.03" rx="1" fill="#95b8e0"/>
<line x1="1137.10" y1="542.65" x2="1149.38" y2="542.65" stroke="#788089" stroke-width="1.2"/>
<line x1="1143.24" y1="537.84" x2="1143.24" y2="544.05" stroke="#858585" stroke-width="1.4"/>
<rect x="1151.67" y="540.44" width="12.28" height="2.26" rx="1" fill="#95b8e0"/>
<line x1="1151.67" y1="541.97" x2="1163.95" y2="541.97" stroke="#788089" stroke-width="1.2"/>
<line x1="1157.81" y1="538.41" x2="1157.81" y2="544.96" stroke="#858585" stroke-width="1.4"/>
<rect x="1166.25" y="539.31" width="12.28" height="2.71" rx="1" fill="#95b8e0"/>
<line x1="1166.25" y1="541.06" x2="1178.53" y2="541.06" stroke="#788089" stroke-width="1.2"/>
<line x1="1172.39" y1="537.28" x2="1172.39" y2="544.28" stroke="#858585" stroke-width="1.4"/>
<rect x="1180.83" y="538.41" width="12.28" height="2.03" rx="1" fill="#95b8e0"/>
<line x1="1180.83" y1="539.82" x2="1193.11" y2="539.82" stroke="#788089" stroke-width="1.2"/>
<line x1="1186.97" y1="537.05" x2="1186.97" y2="542.02" stroke="#858585" stroke-width="1.4"/>
<rect x="1195.41" y="538.63" width="12.28" height="1.81" rx="1" fill="#95b8e0"/>
<line x1="1195.41" y1="539.93" x2="1207.69" y2="539.93" stroke="#788089" stroke-width="1.2"/>
<line x1="1201.55" y1="535.02" x2="1201.55" y2="543.83" stroke="#858585" stroke-width="1.4"/>
<rect x="1209.99" y="538.97" width="12.28" height="1.50" rx="1" fill="#95b8e0"/>
<line x1="1209.99" y1="540.10" x2="1222.27" y2="540.10" stroke="#788089" stroke-width="1.2"/>
<line x1="1216.13" y1="535.92" x2="1216.13" y2="541.79" stroke="#858585" stroke-width="1.4"/>
<rect x="1224.57" y="540.10" width="12.28" height="3.05" rx="1" fill="#95b8e0"/>
<line x1="1224.57" y1="542.02" x2="1236.85" y2="542.02" stroke="#788089" stroke-width="1.2"/>
<line x1="1230.71" y1="537.05" x2="1230.71" y2="544.05" stroke="#858585" stroke-width="1.4"/>
<line x1="888.60" y1="540.77" x2="1238.50" y2="540.77" stroke="#d56ba8" stroke-width="2"/>
<text x="1079.00" y="479.8" font-size="12.7" fill="#333" text-anchor="middle">Memory Utilization in Percent (Current)</text>
<text x="1079.00" y="493.0" font-size="10.8" fill="#000" text-anchor="middle">dendenscaleset: Workload Chart (Avg 61.75 %)</text>
<text x="1063.55" y="719" font-size="11.3" fill="#222" text-anchor="middle">Time of Day</text>
<text transform="translate(855.00,601.85) rotate(-90)" x="0" y="4" font-size="11.1" fill="#333" text-anchor="middle">CPU Utilization - Busiest Da...</text>
<rect x="959.5" y="726.5" width="217" height="17" fill="#fff" stroke="#000" stroke-width="1"/>
<rect x="963.50" y="732.25" width="1.2" height="6" fill="#c8c8c8"/>
<text transform="translate(968.80,737.70) scale(0.95,1)" font-size="10.3" fill="#222">Min/Max</text>
<rect x="1011.30" y="732.45" width="4.6" height="4.6" fill="#95b8e0"/>
<text transform="translate(1020.00,737.70) scale(0.95,1)" font-size="10.3" fill="#222">Sustained Activity</text>
<rect x="1101.00" y="734.05" width="8" height="1.6" fill="#d56ba8"/>
<text transform="translate(1112.70,737.70) scale(0.95,1)" font-size="10.3" fill="#222">High Limit: 85</text>
<line x1="1307.50" y1="671.81" x2="1655.80" y2="671.81" stroke="#d6d6d6" stroke-width="1" stroke-dasharray="2,3"/>
<line x1="1307.50" y1="654.32" x2="1655.80" y2="654.32" stroke="#d6d6d6" stroke-width="1" stroke-dasharray="2,3"/>
<line x1="1307.50" y1="636.83" x2="1655.80" y2="636.83" stroke="#d6d6d6" stroke-width="1" stroke-dasharray="2,3"/>
<line x1="1307.50" y1="619.34" x2="1655.80" y2="619.34" stroke="#d6d6d6" stroke-width="1" stroke-dasharray="2,3"/>
<line x1="1307.50" y1="601.85" x2="1655.80" y2="601.85" stroke="#d6d6d6" stroke-width="1" stroke-dasharray="2,3"/>
<line x1="1307.50" y1="584.36" x2="1655.80" y2="584.36" stroke="#d6d6d6" stroke-width="1" stroke-dasharray="2,3"/>
<line x1="1307.50" y1="566.87" x2="1655.80" y2="566.87" stroke="#d6d6d6" stroke-width="1" stroke-dasharray="2,3"/>
<line x1="1307.50" y1="549.38" x2="1655.80" y2="549.38" stroke="#d6d6d6" stroke-width="1" stroke-dasharray="2,3"/>
<line x1="1307.50" y1="531.89" x2="1655.80" y2="531.89" stroke="#d6d6d6" stroke-width="1" stroke-dasharray="2,3"/>
<line x1="1307.50" y1="514.40" x2="1655.80" y2="514.40" stroke="#d6d6d6" stroke-width="1" stroke-dasharray="2,3"/>
<line x1="1304.00" y1="689.30" x2="1306.50" y2="689.30" stroke="#b8b8b8" stroke-width="1"/>
<text transform="translate(1300.50,692.90) scale(0.9,1)" font-size="10.4" fill="#3a3a3a" text-anchor="end">0</text>
<line x1="1304.00" y1="671.81" x2="1306.50" y2="671.81" stroke="#b8b8b8" stroke-width="1"/>
<text transform="translate(1300.50,675.41) scale(0.9,1)" font-size="10.4" fill="#3a3a3a" text-anchor="end">10</text>
<line x1="1304.00" y1="654.32" x2="1306.50" y2="654.32" stroke="#b8b8b8" stroke-width="1"/>
<text transform="translate(1300.50,657.92) scale(0.9,1)" font-size="10.4" fill="#3a3a3a" text-anchor="end">20</text>
<line x1="1304.00" y1="636.83" x2="1306.50" y2="636.83" stroke="#b8b8b8" stroke-width="1"/>
<text transform="translate(1300.50,640.43) scale(0.9,1)" font-size="10.4" fill="#3a3a3a" text-anchor="end">30</text>
<line x1="1304.00" y1="619.34" x2="1306.50" y2="619.34" stroke="#b8b8b8" stroke-width="1"/>
<text transform="translate(1300.50,622.94) scale(0.9,1)" font-size="10.4" fill="#3a3a3a" text-anchor="end">40</text>
<line x1="1304.00" y1="601.85" x2="1306.50" y2="601.85" stroke="#b8b8b8" stroke-width="1"/>
<text transform="translate(1300.50,605.45) scale(0.9,1)" font-size="10.4" fill="#3a3a3a" text-anchor="end">50</text>
<line x1="1304.00" y1="584.36" x2="1306.50" y2="584.36" stroke="#b8b8b8" stroke-width="1"/>
<text transform="translate(1300.50,587.96) scale(0.9,1)" font-size="10.4" fill="#3a3a3a" text-anchor="end">60</text>
<line x1="1304.00" y1="566.87" x2="1306.50" y2="566.87" stroke="#b8b8b8" stroke-width="1"/>
<text transform="translate(1300.50,570.47) scale(0.9,1)" font-size="10.4" fill="#3a3a3a" text-anchor="end">70</text>
<line x1="1304.00" y1="549.38" x2="1306.50" y2="549.38" stroke="#b8b8b8" stroke-width="1"/>
<text transform="translate(1300.50,552.98) scale(0.9,1)" font-size="10.4" fill="#3a3a3a" text-anchor="end">80</text>
<line x1="1304.00" y1="531.89" x2="1306.50" y2="531.89" stroke="#b8b8b8" stroke-width="1"/>
<text transform="translate(1300.50,535.49) scale(0.9,1)" font-size="10.4" fill="#3a3a3a" text-anchor="end">90</text>
<line x1="1304.00" y1="514.40" x2="1306.50" y2="514.40" stroke="#b8b8b8" stroke-width="1"/>
<text transform="translate(1300.50,518.00) scale(0.9,1)" font-size="10.4" fill="#3a3a3a" text-anchor="end">100</text>
<line x1="1306.50" y1="514.3" x2="1306.50" y2="689.30" stroke="#c4c4c4" stroke-width="1"/>
<line x1="1304.50" y1="689.30" x2="1655.80" y2="689.30" stroke="#c4c4c4" stroke-width="1"/>
<line x1="1313.78" y1="689.30" x2="1313.78" y2="691.80" stroke="#c4c4c4" stroke-width="1"/>
<text transform="translate(1313.48,702.6) scale(0.9,1)" font-size="10.4" fill="#3a3a3a" text-anchor="middle">0</text>
<line x1="1328.33" y1="689.30" x2="1328.33" y2="691.80" stroke="#c4c4c4" stroke-width="1"/>
<text transform="translate(1328.03,702.6) scale(0.9,1)" font-size="10.4" fill="#3a3a3a" text-anchor="middle">1</text>
<line x1="1342.89" y1="689.30" x2="1342.89" y2="691.80" stroke="#c4c4c4" stroke-width="1"/>
<text transform="translate(1342.59,702.6) scale(0.9,1)" font-size="10.4" fill="#3a3a3a" text-anchor="middle">2</text>
<line x1="1357.44" y1="689.30" x2="1357.44" y2="691.80" stroke="#c4c4c4" stroke-width="1"/>
<text transform="translate(1357.14,702.6) scale(0.9,1)" font-size="10.4" fill="#3a3a3a" text-anchor="middle">3</text>
<line x1="1371.99" y1="689.30" x2="1371.99" y2="691.80" stroke="#c4c4c4" stroke-width="1"/>
<text transform="translate(1371.69,702.6) scale(0.9,1)" font-size="10.4" fill="#3a3a3a" text-anchor="middle">4</text>
<line x1="1386.55" y1="689.30" x2="1386.55" y2="691.80" stroke="#c4c4c4" stroke-width="1"/>
<text transform="translate(1386.25,702.6) scale(0.9,1)" font-size="10.4" fill="#3a3a3a" text-anchor="middle">5</text>
<line x1="1401.10" y1="689.30" x2="1401.10" y2="691.80" stroke="#c4c4c4" stroke-width="1"/>
<text transform="translate(1400.80,702.6) scale(0.9,1)" font-size="10.4" fill="#3a3a3a" text-anchor="middle">6</text>
<line x1="1415.66" y1="689.30" x2="1415.66" y2="691.80" stroke="#c4c4c4" stroke-width="1"/>
<text transform="translate(1415.36,702.6) scale(0.9,1)" font-size="10.4" fill="#3a3a3a" text-anchor="middle">7</text>
<line x1="1430.21" y1="689.30" x2="1430.21" y2="691.80" stroke="#c4c4c4" stroke-width="1"/>
<text transform="translate(1429.91,702.6) scale(0.9,1)" font-size="10.4" fill="#3a3a3a" text-anchor="middle">8</text>
<line x1="1444.76" y1="689.30" x2="1444.76" y2="691.80" stroke="#c4c4c4" stroke-width="1"/>
<text transform="translate(1444.46,702.6) scale(0.9,1)" font-size="10.4" fill="#3a3a3a" text-anchor="middle">9</text>
<line x1="1459.32" y1="689.30" x2="1459.32" y2="691.80" stroke="#c4c4c4" stroke-width="1"/>
<text transform="translate(1459.02,702.6) scale(0.9,1)" font-size="10.4" fill="#3a3a3a" text-anchor="middle">10</text>
<line x1="1473.87" y1="689.30" x2="1473.87" y2="691.80" stroke="#c4c4c4" stroke-width="1"/>
<text transform="translate(1473.57,702.6) scale(0.9,1)" font-size="10.4" fill="#3a3a3a" text-anchor="middle">11</text>
<line x1="1488.43" y1="689.30" x2="1488.43" y2="691.80" stroke="#c4c4c4" stroke-width="1"/>
<text transform="translate(1488.13,702.6) scale(0.9,1)" font-size="10.4" fill="#3a3a3a" text-anchor="middle">12</text>
<line x1="1502.98" y1="689.30" x2="1502.98" y2="691.80" stroke="#c4c4c4" stroke-width="1"/>
<text transform="translate(1502.68,702.6) scale(0.9,1)" font-size="10.4" fill="#3a3a3a" text-anchor="middle">13</text>
<line x1="1517.54" y1="689.30" x2="1517.54" y2="691.80" stroke="#c4c4c4" stroke-width="1"/>
<text transform="translate(1517.24,702.6) scale(0.9,1)" font-size="10.4" fill="#3a3a3a" text-anchor="middle">14</text>
<line x1="1532.09" y1="689.30" x2="1532.09" y2="691.80" stroke="#c4c4c4" stroke-width="1"/>
<text transform="translate(1531.79,702.6) scale(0.9,1)" font-size="10.4" fill="#3a3a3a" text-anchor="middle">15</text>
<line x1="1546.64" y1="689.30" x2="1546.64" y2="691.80" stroke="#c4c4c4" stroke-width="1"/>
<text transform="translate(1546.34,702.6) scale(0.9,1)" font-size="10.4" fill="#3a3a3a" text-anchor="middle">16</text>
<line x1="1561.20" y1="689.30" x2="1561.20" y2="691.80" stroke="#c4c4c4" stroke-width="1"/>
<text transform="translate(1560.90,702.6) scale(0.9,1)" font-size="10.4" fill="#3a3a3a" text-anchor="middle">17</text>
<line x1="1575.75" y1="689.30" x2="1575.75" y2="691.80" stroke="#c4c4c4" stroke-width="1"/>
<text transform="translate(1575.45,702.6) scale(0.9,1)" font-size="10.4" fill="#3a3a3a" text-anchor="middle">18</text>
<line x1="1590.31" y1="689.30" x2="1590.31" y2="691.80" stroke="#c4c4c4" stroke-width="1"/>
<text transform="translate(1590.01,702.6) scale(0.9,1)" font-size="10.4" fill="#3a3a3a" text-anchor="middle">19</text>
<line x1="1604.86" y1="689.30" x2="1604.86" y2="691.80" stroke="#c4c4c4" stroke-width="1"/>
<text transform="translate(1604.56,702.6) scale(0.9,1)" font-size="10.4" fill="#3a3a3a" text-anchor="middle">20</text>
<line x1="1619.41" y1="689.30" x2="1619.41" y2="691.80" stroke="#c4c4c4" stroke-width="1"/>
<text transform="translate(1619.11,702.6) scale(0.9,1)" font-size="10.4" fill="#3a3a3a" text-anchor="middle">21</text>
<line x1="1633.97" y1="689.30" x2="1633.97" y2="691.80" stroke="#c4c4c4" stroke-width="1"/>
<text transform="translate(1633.67,702.6) scale(0.9,1)" font-size="10.4" fill="#3a3a3a" text-anchor="middle">22</text>
<line x1="1648.52" y1="689.30" x2="1648.52" y2="691.80" stroke="#c4c4c4" stroke-width="1"/>
<text transform="translate(1648.22,702.6) scale(0.9,1)" font-size="10.4" fill="#3a3a3a" text-anchor="middle">23</text>
<rect x="1307.15" y="574.9" width="12.25" height="6.9" rx="1.5" fill="#95b8e0"/>
<line x1="1307.15" y1="581.2" x2="1319.40" y2="581.2" stroke="#6c6c6c" stroke-width="1.5"/>
<line x1="1313.28" y1="573.6" x2="1313.28" y2="575.5" stroke="#777" stroke-width="1.6"/>
<rect x="1321.70" y="574.9" width="12.25" height="6.9" rx="1.5" fill="#95b8e0"/>
<line x1="1321.70" y1="581.2" x2="1333.96" y2="581.2" stroke="#6c6c6c" stroke-width="1.5"/>
<line x1="1327.83" y1="573.6" x2="1327.83" y2="575.5" stroke="#777" stroke-width="1.6"/>
<rect x="1336.26" y="574.9" width="12.25" height="6.9" rx="1.5" fill="#95b8e0"/>
<line x1="1336.26" y1="581.2" x2="1348.51" y2="581.2" stroke="#6c6c6c" stroke-width="1.5"/>
<line x1="1342.39" y1="573.6" x2="1342.39" y2="575.5" stroke="#777" stroke-width="1.6"/>
<rect x="1350.81" y="574.9" width="12.25" height="6.9" rx="1.5" fill="#95b8e0"/>
<line x1="1350.81" y1="581.2" x2="1363.07" y2="581.2" stroke="#6c6c6c" stroke-width="1.5"/>
<line x1="1356.94" y1="573.6" x2="1356.94" y2="575.5" stroke="#777" stroke-width="1.6"/>
<rect x="1365.37" y="574.9" width="12.25" height="6.9" rx="1.5" fill="#95b8e0"/>
<line x1="1365.37" y1="581.2" x2="1377.62" y2="581.2" stroke="#6c6c6c" stroke-width="1.5"/>
<line x1="1371.49" y1="573.6" x2="1371.49" y2="575.5" stroke="#777" stroke-width="1.6"/>
<rect x="1379.92" y="574.9" width="12.25" height="6.9" rx="1.5" fill="#95b8e0"/>
<line x1="1379.92" y1="581.2" x2="1392.17" y2="581.2" stroke="#6c6c6c" stroke-width="1.5"/>
<line x1="1386.05" y1="573.6" x2="1386.05" y2="575.5" stroke="#777" stroke-width="1.6"/>
<rect x="1394.47" y="574.9" width="12.25" height="6.9" rx="1.5" fill="#95b8e0"/>
<line x1="1394.47" y1="581.2" x2="1406.73" y2="581.2" stroke="#6c6c6c" stroke-width="1.5"/>
<line x1="1400.60" y1="573.6" x2="1400.60" y2="575.5" stroke="#777" stroke-width="1.6"/>
<rect x="1409.03" y="574.9" width="12.25" height="6.9" rx="1.5" fill="#95b8e0"/>
<line x1="1409.03" y1="581.2" x2="1421.28" y2="581.2" stroke="#6c6c6c" stroke-width="1.5"/>
<line x1="1415.16" y1="573.6" x2="1415.16" y2="575.5" stroke="#777" stroke-width="1.6"/>
<rect x="1423.58" y="574.9" width="12.25" height="6.9" rx="1.5" fill="#95b8e0"/>
<line x1="1423.58" y1="581.2" x2="1435.84" y2="581.2" stroke="#6c6c6c" stroke-width="1.5"/>
<line x1="1429.71" y1="573.6" x2="1429.71" y2="575.5" stroke="#777" stroke-width="1.6"/>
<rect x="1438.14" y="574.9" width="12.25" height="6.9" rx="1.5" fill="#95b8e0"/>
<line x1="1438.14" y1="581.2" x2="1450.39" y2="581.2" stroke="#6c6c6c" stroke-width="1.5"/>
<line x1="1444.26" y1="573.6" x2="1444.26" y2="575.5" stroke="#777" stroke-width="1.6"/>
<rect x="1452.69" y="574.9" width="12.25" height="6.9" rx="1.5" fill="#95b8e0"/>
<line x1="1452.69" y1="581.2" x2="1464.95" y2="581.2" stroke="#6c6c6c" stroke-width="1.5"/>
<line x1="1458.82" y1="573.6" x2="1458.82" y2="575.5" stroke="#777" stroke-width="1.6"/>
<rect x="1467.25" y="574.9" width="12.25" height="6.9" rx="1.5" fill="#95b8e0"/>
<line x1="1467.25" y1="581.2" x2="1479.50" y2="581.2" stroke="#6c6c6c" stroke-width="1.5"/>
<line x1="1473.37" y1="573.6" x2="1473.37" y2="575.5" stroke="#777" stroke-width="1.6"/>
<rect x="1481.80" y="574.9" width="12.25" height="6.9" rx="1.5" fill="#95b8e0"/>
<line x1="1481.80" y1="581.2" x2="1494.05" y2="581.2" stroke="#6c6c6c" stroke-width="1.5"/>
<line x1="1487.93" y1="573.6" x2="1487.93" y2="575.5" stroke="#777" stroke-width="1.6"/>
<rect x="1496.35" y="574.9" width="12.25" height="6.9" rx="1.5" fill="#95b8e0"/>
<line x1="1496.35" y1="581.2" x2="1508.61" y2="581.2" stroke="#6c6c6c" stroke-width="1.5"/>
<line x1="1502.48" y1="573.6" x2="1502.48" y2="575.5" stroke="#777" stroke-width="1.6"/>
<rect x="1510.91" y="574.9" width="12.25" height="6.9" rx="1.5" fill="#95b8e0"/>
<line x1="1510.91" y1="581.2" x2="1523.16" y2="581.2" stroke="#6c6c6c" stroke-width="1.5"/>
<line x1="1517.04" y1="573.6" x2="1517.04" y2="575.5" stroke="#777" stroke-width="1.6"/>
<rect x="1525.46" y="574.9" width="12.25" height="6.9" rx="1.5" fill="#95b8e0"/>
<line x1="1525.46" y1="581.2" x2="1537.72" y2="581.2" stroke="#6c6c6c" stroke-width="1.5"/>
<line x1="1531.59" y1="573.6" x2="1531.59" y2="575.5" stroke="#777" stroke-width="1.6"/>
<rect x="1540.02" y="574.9" width="12.25" height="6.9" rx="1.5" fill="#95b8e0"/>
<line x1="1540.02" y1="581.2" x2="1552.27" y2="581.2" stroke="#6c6c6c" stroke-width="1.5"/>
<line x1="1546.14" y1="573.6" x2="1546.14" y2="575.5" stroke="#777" stroke-width="1.6"/>
<rect x="1554.57" y="574.9" width="12.25" height="6.9" rx="1.5" fill="#95b8e0"/>
<line x1="1554.57" y1="581.2" x2="1566.83" y2="581.2" stroke="#6c6c6c" stroke-width="1.5"/>
<line x1="1560.70" y1="573.6" x2="1560.70" y2="575.5" stroke="#777" stroke-width="1.6"/>
<rect x="1569.12" y="574.9" width="12.25" height="6.9" rx="1.5" fill="#95b8e0"/>
<line x1="1569.12" y1="581.2" x2="1581.38" y2="581.2" stroke="#6c6c6c" stroke-width="1.5"/>
<line x1="1575.25" y1="573.6" x2="1575.25" y2="575.5" stroke="#777" stroke-width="1.6"/>
<rect x="1583.68" y="574.9" width="12.25" height="6.9" rx="1.5" fill="#95b8e0"/>
<line x1="1583.68" y1="581.2" x2="1595.93" y2="581.2" stroke="#6c6c6c" stroke-width="1.5"/>
<line x1="1589.81" y1="573.6" x2="1589.81" y2="575.5" stroke="#777" stroke-width="1.6"/>
<rect x="1598.23" y="574.9" width="12.25" height="6.9" rx="1.5" fill="#95b8e0"/>
<line x1="1598.23" y1="581.2" x2="1610.49" y2="581.2" stroke="#6c6c6c" stroke-width="1.5"/>
<line x1="1604.36" y1="573.6" x2="1604.36" y2="575.5" stroke="#777" stroke-width="1.6"/>
<rect x="1612.79" y="574.9" width="12.25" height="6.9" rx="1.5" fill="#95b8e0"/>
<line x1="1612.79" y1="581.2" x2="1625.04" y2="581.2" stroke="#6c6c6c" stroke-width="1.5"/>
<line x1="1618.91" y1="573.6" x2="1618.91" y2="575.5" stroke="#777" stroke-width="1.6"/>
<rect x="1627.34" y="574.9" width="12.25" height="6.9" rx="1.5" fill="#95b8e0"/>
<line x1="1627.34" y1="581.2" x2="1639.60" y2="581.2" stroke="#6c6c6c" stroke-width="1.5"/>
<line x1="1633.47" y1="573.6" x2="1633.47" y2="575.5" stroke="#777" stroke-width="1.6"/>
<rect x="1641.90" y="574.9" width="12.25" height="6.9" rx="1.5" fill="#95b8e0"/>
<line x1="1641.90" y1="581.2" x2="1654.15" y2="581.2" stroke="#6c6c6c" stroke-width="1.5"/>
<line x1="1648.02" y1="573.6" x2="1648.02" y2="575.5" stroke="#777" stroke-width="1.6"/>
<line x1="1306.50" y1="523.14" x2="1655.80" y2="523.14" stroke="#d56ba8" stroke-width="2"/>
<text x="1473.00" y="480.4" font-size="12.7" fill="#333" text-anchor="middle">Disk I/O Bytes</text>
<text x="1473.00" y="493.3" font-size="10.8" fill="#000" text-anchor="middle">dendenscaleset: Workload Chart (Avg 53,700.58 Bytes/s)</text>
<text x="1481.15" y="719" font-size="11.3" fill="#222" text-anchor="middle">Time of Day</text>
<text transform="translate(1273.60,601.85) rotate(-90)" x="0" y="4" font-size="11.1" fill="#333" text-anchor="middle">Memory Utilization in Percen...</text>
<rect x="1374.5" y="724.5" width="216" height="17" fill="#fff" stroke="#000" stroke-width="1"/>
<rect x="1378.50" y="730.40" width="1.2" height="6" fill="#c8c8c8"/>
<text transform="translate(1383.80,736.30) scale(0.95,1)" font-size="10.3" fill="#222">Min/Max</text>
<rect x="1426.30" y="730.60" width="4.6" height="4.6" fill="#95b8e0"/>
<text transform="translate(1435.00,736.30) scale(0.95,1)" font-size="10.3" fill="#222">Sustained Activity</text>
<rect x="1516.00" y="732.20" width="8" height="1.6" fill="#d56ba8"/>
<text transform="translate(1527.70,736.30) scale(0.95,1)" font-size="10.3" fill="#222">High Limit: 95</text>
<rect x="188" y="502" width="25" height="7" fill="#000"/>
<svg x="36" y="500" width="24" height="4" overflow="hidden"><text x="2.3" y="9.6" font-size="10.8" fill="#000">100</text></svg>
<rect x="1036" y="504" width="1" height="2" fill="#999"/>
</svg>
</body></html>
